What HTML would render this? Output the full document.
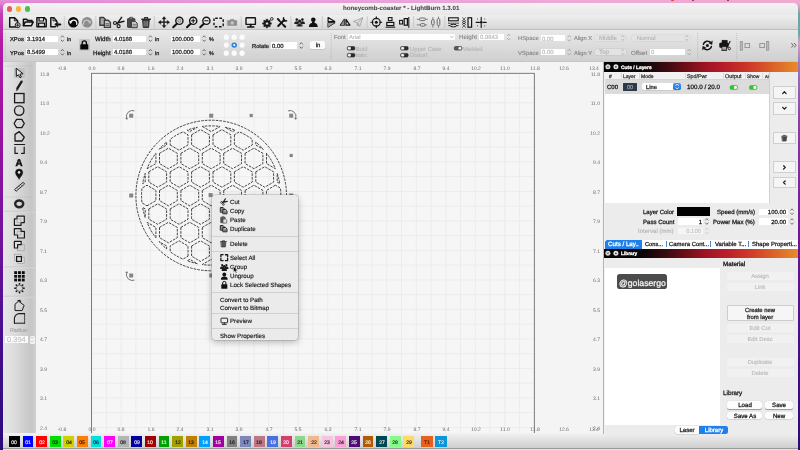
<!DOCTYPE html><html><head><meta charset="utf-8"><title>honeycomb-coaster * - LightBurn 1.3.01</title><style>
html,body{margin:0;padding:0}
body{width:800px;height:450px;overflow:hidden;position:relative;font-family:"Liberation Sans",sans-serif;
background:linear-gradient(180deg,#e58ad6 0px,#c43cb6 14px,#b31aa8 40px,#9a12a2 130px,#74129e 230px,#480f90 330px,#2a0a7a 450px);}
div{position:absolute;box-sizing:border-box}
.t{text-rendering:geometricPrecision}
#win{filter:blur(0.35px)}
svg{position:absolute;overflow:visible}
</style></head><body>
<div style="left:0px;top:0px;width:800px;height:4.5px;background:linear-gradient(90deg,rgba(238,172,222,.15) 0%,rgba(238,172,222,.6) 35%,rgba(240,175,215,.85) 70%,rgba(242,172,205,.95) 100%)"></div>
<div style="left:797px;top:4px;width:3px;height:446px;background:linear-gradient(180deg,#e8a8cc 0px,#6aa6a6 10px,#6aa6a6 30px,#d8a0c4 38px,#9a78c0 60px,#8a3aa8 120px,#74129e 230px,#480f90 330px,#2a0a7a 446px)"></div>
<div style="left:670.5px;top:0px;width:3.2px;height:1.3px;background:#e23a3a;border-radius:0 0 1px 1px"></div>
<div style="left:692px;top:0px;width:2.4px;height:1px;background:#8a4070"></div>
<div style="left:727px;top:0px;width:2.4px;height:1px;background:#8a4070"></div>
<div id="win" style="left:3px;top:3px;width:795.4px;height:450px;background:#e9e9e9;border-radius:5px 5px 0 0;overflow:hidden">
<div style="left:-3px;top:-3px;width:800px;height:454px;will-change:transform">
<div style="left:3px;top:3px;width:795px;height:11.5px;background:linear-gradient(180deg,#f4f2f4,#e9e8e9)"></div>
<div style="left:7px;top:6.4px;width:5.2px;height:5.2px;border-radius:50%;background:#ee5b55"></div>
<div style="left:15.8px;top:6.4px;width:5.2px;height:5.2px;border-radius:50%;background:#f5b63a"></div>
<div style="left:24.8px;top:6.4px;width:5.2px;height:5.2px;border-radius:50%;background:#48c04a"></div>
<svg class="t" style="left:342.8px;top:10px" width="1" height="1"><text text-anchor="start" font-size="6.16" fill="#464646" stroke="#464646" stroke-width="0.05" font-weight="bold">honeycomb-coaster * - LightBurn 1.3.01</text></svg>
<div style="left:3px;top:14.5px;width:795px;height:15px;background:linear-gradient(180deg,#efefef,#d6d6d6)"></div>
<div style="left:3px;top:29.2px;width:795px;height:0.8px;background:#bdbdbd"></div>
<div style="left:3px;top:30px;width:795px;height:31.5px;background:linear-gradient(180deg,#e9e9e9,#cfcfcf)"></div>
<div style="left:3px;top:61.3px;width:795px;height:0.7px;background:#c6c6c6"></div>
<div style="left:3px;top:62px;width:33px;height:371px;background:linear-gradient(90deg,#e6e6e6 0%,#dedede 30%,#c6c6c6 85%,#cfcfcf 100%)"></div>
<div style="left:36px;top:62px;width:567.5px;height:371px;background:#f4f4f4"></div>
<div style="left:603.5px;top:62px;width:195px;height:374px;background:#ececec"></div>
<div style="left:3px;top:433px;width:600.5px;height:16px;background:linear-gradient(180deg,#f0f0f0,#dcdcdc)"></div>
<div style="left:3px;top:435px;width:796px;height:13.5px;background:linear-gradient(180deg,#ececec,#cccccc)"></div>
<div style="left:3px;top:433px;width:600px;height:15.5px;background:linear-gradient(180deg,#f2f2f2 0%,#ececec 15%,#cccccc 100%)"></div>
<div style="left:3px;top:448.3px;width:795px;height:0.7px;background:#9a9a9a"></div>
<div style="left:3px;top:449px;width:795px;height:5px;background:#e6e6e6"></div>
<svg style="left:36px;top:62px" width="567.5" height="371" viewBox="36 62 567.5 371">
<defs><clipPath id="cv"><rect x="36" y="62" width="567.5" height="371"/></clipPath></defs>
<g clip-path="url(#cv)">
<rect x="91.6" y="73.3" width="442.71" height="442.71" fill="#f6f6f6"/>
<path d="M106.36 73.3V433M121.11 73.3V433M135.87 73.3V433M150.63 73.3V433M165.38 73.3V433M180.14 73.3V433M194.90 73.3V433M209.66 73.3V433M224.41 73.3V433M239.17 73.3V433M253.93 73.3V433M268.68 73.3V433M283.44 73.3V433M298.20 73.3V433M312.95 73.3V433M327.71 73.3V433M342.47 73.3V433M357.23 73.3V433M371.98 73.3V433M386.74 73.3V433M401.50 73.3V433M416.25 73.3V433M431.01 73.3V433M445.77 73.3V433M460.52 73.3V433M475.28 73.3V433M490.04 73.3V433M504.80 73.3V433M519.55 73.3V433M91.6 88.06H534.31M91.6 102.81H534.31M91.6 117.57H534.31M91.6 132.33H534.31M91.6 147.08H534.31M91.6 161.84H534.31M91.6 176.60H534.31M91.6 191.36H534.31M91.6 206.11H534.31M91.6 220.87H534.31M91.6 235.63H534.31M91.6 250.38H534.31M91.6 265.14H534.31M91.6 279.90H534.31M91.6 294.65H534.31M91.6 309.41H534.31M91.6 324.17H534.31M91.6 338.93H534.31M91.6 353.68H534.31M91.6 368.44H534.31M91.6 383.20H534.31M91.6 397.95H534.31M91.6 412.71H534.31M91.6 427.47H534.31M91.6 442.23H534.31" stroke="#ececec" stroke-width="1" fill="none"/>
<rect x="91.6" y="73.3" width="442.71" height="442.71" fill="none" stroke="#666" stroke-width="0.85"/>
<path d="M189.8 131.6L197.3 127.3L195.4 127.7L193.2 128.3L191.0 128.9L188.8 129.6L187.2 130.2ZM202.3 126.5L211.2 131.6L220.1 126.5L220.1 126.5L218.0 126.2L215.8 126.0L213.5 125.9L211.2 125.9L208.9 125.9L206.6 126.0L204.4 126.2L202.3 126.5ZM232.6 131.6L235.2 130.2L233.6 129.6L231.4 128.9L229.2 128.3L227.0 127.7L225.1 127.3ZM166.6 145.0L166.6 142.1L165.3 143.2L163.6 144.7L162.0 146.3L160.4 147.9L159.1 149.4ZM170.2 145.0L179.1 150.2L188.0 145.0L188.0 134.8L183.0 131.9L182.5 132.1L180.4 133.1L178.4 134.1L176.4 135.2L174.4 136.4L172.5 137.6L170.7 138.9L170.2 139.3ZM191.6 134.8L191.6 145.0L200.5 150.2L209.4 145.0L209.4 134.8L200.5 129.6ZM213.0 134.8L213.0 145.0L221.9 150.2L230.8 145.0L230.8 134.8L221.9 129.6ZM234.4 134.8L234.4 145.0L243.3 150.2L252.2 145.0L252.2 139.3L251.7 138.9L249.9 137.6L248.0 136.4L246.0 135.2L244.0 134.1L242.0 133.1L239.9 132.1L239.4 131.9ZM255.8 145.0L263.3 149.4L262.0 147.9L260.4 146.3L258.8 144.7L257.1 143.2L255.8 142.1ZM147.0 168.7L155.9 163.6L155.9 153.3L155.9 153.3L154.6 155.0L153.3 156.8L152.1 158.7L150.9 160.7L149.8 162.7L148.8 164.7L147.8 166.8L147.0 168.7ZM159.5 153.3L159.5 163.6L168.4 168.7L177.3 163.6L177.3 153.3L168.4 148.2ZM180.9 153.3L180.9 163.6L189.8 168.7L198.7 163.6L198.7 153.3L189.8 148.2ZM202.3 153.3L202.3 163.6L211.2 168.7L220.1 163.6L220.1 153.3L211.2 148.2ZM223.7 153.3L223.7 163.6L232.6 168.7L241.5 163.6L241.5 153.3L232.6 148.2ZM245.1 153.3L245.1 163.6L254.0 168.7L262.9 163.6L262.9 153.3L254.0 148.2ZM266.5 153.3L266.5 163.6L275.4 168.7L275.4 168.7L274.6 166.8L273.6 164.7L272.6 162.7L271.5 160.7L270.3 158.7L269.1 156.8L267.8 155.0L266.5 153.3ZM145.2 182.1L145.2 173.4L144.6 175.3L144.0 177.5L143.4 179.7L142.9 181.9L142.6 183.6ZM148.8 171.8L148.8 182.1L157.7 187.2L166.6 182.1L166.6 171.8L157.7 166.7ZM170.2 171.8L170.2 182.1L179.1 187.2L188.0 182.1L188.0 171.8L179.1 166.7ZM191.6 171.8L191.6 182.1L200.5 187.2L209.4 182.1L209.4 171.8L200.5 166.7ZM213.0 171.8L213.0 182.1L221.9 187.2L230.8 182.1L230.8 171.8L221.9 166.7ZM234.4 171.8L234.4 182.1L243.3 187.2L252.2 182.1L252.2 171.8L243.3 166.7ZM255.8 171.8L255.8 182.1L264.7 187.2L273.6 182.1L273.6 171.8L264.7 166.7ZM277.2 182.1L279.8 183.6L279.5 181.9L279.0 179.7L278.4 177.5L277.8 175.3L277.2 173.4ZM147.0 205.8L155.9 200.6L155.9 190.4L147.0 185.2L142.0 188.1L141.9 188.7L141.7 190.9L141.6 193.2L141.6 195.5L141.6 197.8L141.7 200.1L141.9 202.3L142.0 202.9ZM159.5 190.4L159.5 200.6L168.4 205.8L177.3 200.6L177.3 190.4L168.4 185.2ZM180.9 190.4L180.9 200.6L189.8 205.8L198.7 200.6L198.7 190.4L189.8 185.2ZM202.3 190.4L202.3 200.6L211.2 205.8L220.1 200.6L220.1 190.4L211.2 185.2ZM223.7 190.4L223.7 200.6L232.6 205.8L241.5 200.6L241.5 190.4L232.6 185.2ZM245.1 190.4L245.1 200.6L254.0 205.8L262.9 200.6L262.9 190.4L254.0 185.2ZM275.4 185.2L266.5 190.4L266.5 200.6L275.4 205.8L280.4 202.9L280.5 202.3L280.7 200.1L280.8 197.8L280.8 195.5L280.8 193.2L280.7 190.9L280.5 188.7L280.4 188.1ZM145.2 208.9L142.6 207.4L142.9 209.1L143.4 211.3L144.0 213.5L144.6 215.7L145.2 217.6ZM148.8 208.9L148.8 219.2L157.7 224.3L166.6 219.2L166.6 208.9L157.7 203.8ZM170.2 208.9L170.2 219.2L179.1 224.3L188.0 219.2L188.0 208.9L179.1 203.8ZM191.6 208.9L191.6 219.2L200.5 224.3L209.4 219.2L209.4 208.9L200.5 203.8ZM213.0 208.9L213.0 219.2L221.9 224.3L230.8 219.2L230.8 208.9L221.9 203.8ZM234.4 208.9L234.4 219.2L243.3 224.3L252.2 219.2L252.2 208.9L243.3 203.8ZM255.8 208.9L255.8 219.2L264.7 224.3L273.6 219.2L273.6 208.9L264.7 203.8ZM277.2 208.9L277.2 217.6L277.8 215.7L278.4 213.5L279.0 211.3L279.5 209.1L279.8 207.4ZM155.9 237.7L155.9 227.4L147.0 222.3L147.0 222.3L147.8 224.2L148.8 226.3L149.8 228.3L150.9 230.3L152.1 232.3L153.3 234.2L154.6 236.0L155.9 237.7ZM159.5 227.4L159.5 237.7L168.4 242.8L177.3 237.7L177.3 227.4L168.4 222.3ZM180.9 227.4L180.9 237.7L189.8 242.8L198.7 237.7L198.7 227.4L189.8 222.3ZM202.3 227.4L202.3 237.7L211.2 242.8L220.1 237.7L220.1 227.4L211.2 222.3ZM223.7 227.4L223.7 237.7L232.6 242.8L241.5 237.7L241.5 227.4L232.6 222.3ZM245.1 227.4L245.1 237.7L254.0 242.8L262.9 237.7L262.9 227.4L254.0 222.3ZM275.4 222.3L266.5 227.4L266.5 237.7L266.5 237.7L267.8 236.0L269.1 234.2L270.3 232.3L271.5 230.3L272.6 228.3L273.6 226.3L274.6 224.2L275.4 222.3ZM166.6 246.0L159.1 241.6L160.4 243.1L162.0 244.7L163.6 246.3L165.3 247.8L166.6 248.9ZM188.0 256.2L188.0 246.0L179.1 240.8L170.2 246.0L170.2 251.7L170.7 252.1L172.5 253.4L174.4 254.6L176.4 255.8L178.4 256.9L180.4 257.9L182.5 258.9L183.0 259.1ZM191.6 246.0L191.6 256.2L200.5 261.4L209.4 256.2L209.4 246.0L200.5 240.8ZM213.0 246.0L213.0 256.2L221.9 261.4L230.8 256.2L230.8 246.0L221.9 240.8ZM252.2 246.0L243.3 240.8L234.4 246.0L234.4 256.2L239.4 259.1L239.9 258.9L242.0 257.9L244.0 256.9L246.0 255.8L248.0 254.6L249.9 253.4L251.7 252.1L252.2 251.7ZM255.8 246.0L255.8 248.9L257.1 247.8L258.8 246.3L260.4 244.7L262.0 243.1L263.3 241.6ZM189.8 259.4L187.2 260.8L188.8 261.4L191.0 262.1L193.2 262.7L195.4 263.3L197.3 263.7ZM220.1 264.5L211.2 259.4L202.3 264.5L202.3 264.5L204.4 264.8L206.6 265.0L208.9 265.1L211.2 265.1L213.5 265.1L215.8 265.0L218.0 264.8L220.1 264.5ZM232.6 259.4L225.1 263.7L227.0 263.3L229.2 262.7L231.4 262.1L233.6 261.4L235.2 260.8Z" fill="none" stroke="#2c2c2c" stroke-width="0.88" stroke-dasharray="2.6 1.1" stroke-linejoin="round"/>
<circle cx="211.2" cy="195.5" r="75.3" fill="none" stroke="#2c2c2c" stroke-width="0.88" stroke-dasharray="2.6 1.1"/>
<rect x="129.20" y="113.70" width="4.0" height="4.0" fill="#858585"/>
<rect x="209.20" y="113.70" width="4.0" height="4.0" fill="#858585"/>
<rect x="289.20" y="113.70" width="4.0" height="4.0" fill="#858585"/>
<rect x="129.20" y="193.50" width="4.0" height="4.0" fill="#858585"/>
<rect x="289.20" y="193.50" width="4.0" height="4.0" fill="#858585"/>
<rect x="129.20" y="273.50" width="4.0" height="4.0" fill="#858585"/>
<rect x="209.20" y="273.50" width="4.0" height="4.0" fill="#858585"/>
<rect x="289.20" y="273.50" width="4.0" height="4.0" fill="#858585"/>
<rect x="208.60" y="193.10" width="4.0" height="4.0" fill="#858585"/>
<rect x="249.60" y="113.90" width="3.2" height="3.2" fill="#858585"/>
<rect x="289.60" y="153.90" width="3.2" height="3.2" fill="#858585"/>
<path d="M134.45 110.86A6 6 0 0 0 126.60 118.05" fill="none" stroke="#6a6a6a" stroke-width="0.9"/>
<path d="M127.07 119.79L125.06 118.47L128.15 117.64Z" fill="#6a6a6a"/>
<path d="M287.95 110.86A6 6 0 0 1 295.80 118.05" fill="none" stroke="#6a6a6a" stroke-width="0.9"/>
<path d="M295.33 119.79L297.34 118.47L294.25 117.64Z" fill="#6a6a6a"/>
<path d="M134.45 280.14A6 6 0 0 1 126.60 272.95" fill="none" stroke="#6a6a6a" stroke-width="0.9"/>
<path d="M127.07 271.21L125.06 272.53L128.15 273.36Z" fill="#6a6a6a"/>
</g></svg>
<svg class="t" style="left:62.386px;top:70px" width="1" height="1"><text text-anchor="middle" font-size="5" fill="#6c6c6c">-0.8</text></svg>
<svg class="t" style="left:62.386px;top:431px" width="1" height="1"><text text-anchor="middle" font-size="5" fill="#6c6c6c">-0.8</text></svg>
<svg class="t" style="left:91.9px;top:70px" width="1" height="1"><text text-anchor="middle" font-size="5" fill="#6c6c6c">0.0</text></svg>
<svg class="t" style="left:91.9px;top:431px" width="1" height="1"><text text-anchor="middle" font-size="5" fill="#6c6c6c">0.0</text></svg>
<svg class="t" style="left:121.414px;top:70px" width="1" height="1"><text text-anchor="middle" font-size="5" fill="#6c6c6c">0.8</text></svg>
<svg class="t" style="left:121.414px;top:431px" width="1" height="1"><text text-anchor="middle" font-size="5" fill="#6c6c6c">0.8</text></svg>
<svg class="t" style="left:150.928px;top:70px" width="1" height="1"><text text-anchor="middle" font-size="5" fill="#6c6c6c">1.6</text></svg>
<svg class="t" style="left:150.928px;top:431px" width="1" height="1"><text text-anchor="middle" font-size="5" fill="#6c6c6c">1.6</text></svg>
<svg class="t" style="left:180.442px;top:70px" width="1" height="1"><text text-anchor="middle" font-size="5" fill="#6c6c6c">2.4</text></svg>
<svg class="t" style="left:180.442px;top:431px" width="1" height="1"><text text-anchor="middle" font-size="5" fill="#6c6c6c">2.4</text></svg>
<svg class="t" style="left:209.956px;top:70px" width="1" height="1"><text text-anchor="middle" font-size="5" fill="#6c6c6c">3.1</text></svg>
<svg class="t" style="left:209.956px;top:431px" width="1" height="1"><text text-anchor="middle" font-size="5" fill="#6c6c6c">3.1</text></svg>
<svg class="t" style="left:239.47px;top:70px" width="1" height="1"><text text-anchor="middle" font-size="5" fill="#6c6c6c">3.9</text></svg>
<svg class="t" style="left:239.47px;top:431px" width="1" height="1"><text text-anchor="middle" font-size="5" fill="#6c6c6c">3.9</text></svg>
<svg class="t" style="left:268.984px;top:70px" width="1" height="1"><text text-anchor="middle" font-size="5" fill="#6c6c6c">4.7</text></svg>
<svg class="t" style="left:268.984px;top:431px" width="1" height="1"><text text-anchor="middle" font-size="5" fill="#6c6c6c">4.7</text></svg>
<svg class="t" style="left:298.498px;top:70px" width="1" height="1"><text text-anchor="middle" font-size="5" fill="#6c6c6c">5.5</text></svg>
<svg class="t" style="left:298.498px;top:431px" width="1" height="1"><text text-anchor="middle" font-size="5" fill="#6c6c6c">5.5</text></svg>
<svg class="t" style="left:328.012px;top:70px" width="1" height="1"><text text-anchor="middle" font-size="5" fill="#6c6c6c">6.3</text></svg>
<svg class="t" style="left:328.012px;top:431px" width="1" height="1"><text text-anchor="middle" font-size="5" fill="#6c6c6c">6.3</text></svg>
<svg class="t" style="left:357.526px;top:70px" width="1" height="1"><text text-anchor="middle" font-size="5" fill="#6c6c6c">7.1</text></svg>
<svg class="t" style="left:357.526px;top:431px" width="1" height="1"><text text-anchor="middle" font-size="5" fill="#6c6c6c">7.1</text></svg>
<svg class="t" style="left:387.04px;top:70px" width="1" height="1"><text text-anchor="middle" font-size="5" fill="#6c6c6c">7.9</text></svg>
<svg class="t" style="left:387.04px;top:431px" width="1" height="1"><text text-anchor="middle" font-size="5" fill="#6c6c6c">7.9</text></svg>
<svg class="t" style="left:416.554px;top:70px" width="1" height="1"><text text-anchor="middle" font-size="5" fill="#6c6c6c">8.7</text></svg>
<svg class="t" style="left:416.554px;top:431px" width="1" height="1"><text text-anchor="middle" font-size="5" fill="#6c6c6c">8.7</text></svg>
<svg class="t" style="left:446.068px;top:70px" width="1" height="1"><text text-anchor="middle" font-size="5" fill="#6c6c6c">9.4</text></svg>
<svg class="t" style="left:446.068px;top:431px" width="1" height="1"><text text-anchor="middle" font-size="5" fill="#6c6c6c">9.4</text></svg>
<svg class="t" style="left:475.582px;top:70px" width="1" height="1"><text text-anchor="middle" font-size="5" fill="#6c6c6c">10.2</text></svg>
<svg class="t" style="left:475.582px;top:431px" width="1" height="1"><text text-anchor="middle" font-size="5" fill="#6c6c6c">10.2</text></svg>
<svg class="t" style="left:505.096px;top:70px" width="1" height="1"><text text-anchor="middle" font-size="5" fill="#6c6c6c">11.0</text></svg>
<svg class="t" style="left:505.096px;top:431px" width="1" height="1"><text text-anchor="middle" font-size="5" fill="#6c6c6c">11.0</text></svg>
<svg class="t" style="left:534.61px;top:70px" width="1" height="1"><text text-anchor="middle" font-size="5" fill="#6c6c6c">11.8</text></svg>
<svg class="t" style="left:534.61px;top:431px" width="1" height="1"><text text-anchor="middle" font-size="5" fill="#6c6c6c">11.8</text></svg>
<svg class="t" style="left:564.124px;top:70px" width="1" height="1"><text text-anchor="middle" font-size="5" fill="#6c6c6c">12.6</text></svg>
<svg class="t" style="left:564.124px;top:431px" width="1" height="1"><text text-anchor="middle" font-size="5" fill="#6c6c6c">12.6</text></svg>
<svg class="t" style="left:593.638px;top:70px" width="1" height="1"><text text-anchor="middle" font-size="5" fill="#6c6c6c">13.4</text></svg>
<svg class="t" style="left:593.638px;top:431px" width="1" height="1"><text text-anchor="middle" font-size="5" fill="#6c6c6c">13.4</text></svg>
<svg class="t" style="left:40px;top:76px" width="1" height="1"><text text-anchor="start" font-size="5" fill="#6c6c6c">11.8</text></svg>
<svg class="t" style="left:600px;top:76px" width="1" height="1"><text text-anchor="end" font-size="5" fill="#6c6c6c">11.8</text></svg>
<svg class="t" style="left:40px;top:105px" width="1" height="1"><text text-anchor="start" font-size="5" fill="#6c6c6c">11.0</text></svg>
<svg class="t" style="left:600px;top:105px" width="1" height="1"><text text-anchor="end" font-size="5" fill="#6c6c6c">11.0</text></svg>
<svg class="t" style="left:40px;top:135px" width="1" height="1"><text text-anchor="start" font-size="5" fill="#6c6c6c">10.2</text></svg>
<svg class="t" style="left:600px;top:135px" width="1" height="1"><text text-anchor="end" font-size="5" fill="#6c6c6c">10.2</text></svg>
<svg class="t" style="left:40px;top:164px" width="1" height="1"><text text-anchor="start" font-size="5" fill="#6c6c6c">9.4</text></svg>
<svg class="t" style="left:600px;top:164px" width="1" height="1"><text text-anchor="end" font-size="5" fill="#6c6c6c">9.4</text></svg>
<svg class="t" style="left:40px;top:194px" width="1" height="1"><text text-anchor="start" font-size="5" fill="#6c6c6c">8.7</text></svg>
<svg class="t" style="left:600px;top:194px" width="1" height="1"><text text-anchor="end" font-size="5" fill="#6c6c6c">8.7</text></svg>
<svg class="t" style="left:40px;top:223px" width="1" height="1"><text text-anchor="start" font-size="5" fill="#6c6c6c">7.9</text></svg>
<svg class="t" style="left:600px;top:223px" width="1" height="1"><text text-anchor="end" font-size="5" fill="#6c6c6c">7.9</text></svg>
<svg class="t" style="left:40px;top:253px" width="1" height="1"><text text-anchor="start" font-size="5" fill="#6c6c6c">7.1</text></svg>
<svg class="t" style="left:600px;top:253px" width="1" height="1"><text text-anchor="end" font-size="5" fill="#6c6c6c">7.1</text></svg>
<svg class="t" style="left:40px;top:282px" width="1" height="1"><text text-anchor="start" font-size="5" fill="#6c6c6c">6.3</text></svg>
<svg class="t" style="left:600px;top:282px" width="1" height="1"><text text-anchor="end" font-size="5" fill="#6c6c6c">6.3</text></svg>
<svg class="t" style="left:40px;top:312px" width="1" height="1"><text text-anchor="start" font-size="5" fill="#6c6c6c">5.5</text></svg>
<svg class="t" style="left:600px;top:312px" width="1" height="1"><text text-anchor="end" font-size="5" fill="#6c6c6c">5.5</text></svg>
<svg class="t" style="left:40px;top:341px" width="1" height="1"><text text-anchor="start" font-size="5" fill="#6c6c6c">4.7</text></svg>
<svg class="t" style="left:600px;top:341px" width="1" height="1"><text text-anchor="end" font-size="5" fill="#6c6c6c">4.7</text></svg>
<svg class="t" style="left:40px;top:371px" width="1" height="1"><text text-anchor="start" font-size="5" fill="#6c6c6c">3.9</text></svg>
<svg class="t" style="left:600px;top:371px" width="1" height="1"><text text-anchor="end" font-size="5" fill="#6c6c6c">3.9</text></svg>
<svg class="t" style="left:40px;top:400px" width="1" height="1"><text text-anchor="start" font-size="5" fill="#6c6c6c">3.1</text></svg>
<svg class="t" style="left:600px;top:400px" width="1" height="1"><text text-anchor="end" font-size="5" fill="#6c6c6c">3.1</text></svg>
<svg class="t" style="left:40px;top:430px" width="1" height="1"><text text-anchor="start" font-size="5" fill="#6c6c6c">2.4</text></svg>
<svg class="t" style="left:600px;top:430px" width="1" height="1"><text text-anchor="end" font-size="5" fill="#6c6c6c">2.4</text></svg>
<svg class="t" style="left:10px;top:41px" width="1" height="1"><text text-anchor="start" font-size="5.77" fill="#262626" stroke="#262626" stroke-width="0.28">XPos</text></svg>
<svg class="t" style="left:10px;top:55px" width="1" height="1"><text text-anchor="start" font-size="5.77" fill="#262626" stroke="#262626" stroke-width="0.28">YPos</text></svg>
<div style="left:25.8px;top:35.6px;width:32.2px;height:6.2px;background:#fff;"></div>
<svg class="t" style="left:27px;top:41px" width="1" height="1"><text text-anchor="start" font-size="5.95" fill="#262626" stroke="#262626" stroke-width="0.28">3.1914</text></svg>
<div style="left:25.8px;top:49.1px;width:32.2px;height:6.2px;background:#fff;"></div>
<svg class="t" style="left:27px;top:54px" width="1" height="1"><text text-anchor="start" font-size="5.95" fill="#262626" stroke="#262626" stroke-width="0.28">8.5499</text></svg>
<svg class="t" style="left:66.7px;top:41px" width="1" height="1"><text text-anchor="start" font-size="5.27" fill="#262626" stroke="#262626" stroke-width="0.28">in</text></svg>
<svg class="t" style="left:66.7px;top:55px" width="1" height="1"><text text-anchor="start" font-size="5.27" fill="#262626" stroke="#262626" stroke-width="0.28">in</text></svg>
<div style="left:78.6px;top:39.2px;width:11.8px;height:11.8px;background:#c6c6c6;border-radius:1px"></div>
<svg class="t" style="left:95.2px;top:41px" width="1" height="1"><text text-anchor="start" font-size="6.1" fill="#262626" stroke="#262626" stroke-width="0.28">Width</text></svg>
<svg class="t" style="left:93.2px;top:55px" width="1" height="1"><text text-anchor="start" font-size="6.09" fill="#262626" stroke="#262626" stroke-width="0.28">Height</text></svg>
<div style="left:113px;top:35.6px;width:33px;height:6.2px;background:#fff;"></div>
<svg class="t" style="left:113.8px;top:41px" width="1" height="1"><text text-anchor="start" font-size="5.95" fill="#262626" stroke="#262626" stroke-width="0.28">4.0188</text></svg>
<div style="left:113px;top:49.1px;width:33px;height:6.2px;background:#fff;"></div>
<svg class="t" style="left:113.8px;top:54px" width="1" height="1"><text text-anchor="start" font-size="5.95" fill="#262626" stroke="#262626" stroke-width="0.28">4.0188</text></svg>
<svg class="t" style="left:155px;top:41px" width="1" height="1"><text text-anchor="start" font-size="5.4" fill="#262626" stroke="#262626" stroke-width="0.28">in</text></svg>
<svg class="t" style="left:155px;top:55px" width="1" height="1"><text text-anchor="start" font-size="5.4" fill="#262626" stroke="#262626" stroke-width="0.28">in</text></svg>
<div style="left:170.8px;top:35.6px;width:29.2px;height:6.2px;background:#fff;"></div>
<svg class="t" style="left:171.6px;top:41px" width="1" height="1"><text text-anchor="start" font-size="5.95" fill="#262626" stroke="#262626" stroke-width="0.28">100.000</text></svg>
<div style="left:170.8px;top:49.1px;width:29.2px;height:6.2px;background:#fff;"></div>
<svg class="t" style="left:171.6px;top:54px" width="1" height="1"><text text-anchor="start" font-size="5.95" fill="#262626" stroke="#262626" stroke-width="0.28">100.000</text></svg>
<svg class="t" style="left:208.7px;top:41px" width="1" height="1"><text text-anchor="start" font-size="5.4" fill="#262626" stroke="#262626" stroke-width="0.28">%</text></svg>
<svg class="t" style="left:208.7px;top:55px" width="1" height="1"><text text-anchor="start" font-size="5.4" fill="#262626" stroke="#262626" stroke-width="0.28">%</text></svg>
<svg class="t" style="left:251.8px;top:48px" width="1" height="1"><text text-anchor="start" font-size="5.77" fill="#262626" stroke="#262626" stroke-width="0.28">Rotate</text></svg>
<div style="left:270.7px;top:42.3px;width:26.1px;height:6.4px;background:#fff;"></div>
<svg class="t" style="left:272.2px;top:48px" width="1" height="1"><text text-anchor="start" font-size="5.95" fill="#262626" stroke="#262626" stroke-width="0.28">0.00</text></svg>
<div style="left:310px;top:41.2px;width:15px;height:8px;background:#fcfcfc;border-radius:1.6px;box-shadow:0 0.3px 0.6px rgba(0,0,0,.35)"></div>
<svg class="t" style="left:317.5px;top:47px" width="1" height="1"><text text-anchor="middle" font-size="5.95" fill="#262626" stroke="#262626" stroke-width="0.28">in</text></svg>
<svg class="t" style="left:334.2px;top:39px" width="1" height="1"><text text-anchor="start" font-size="5.8" fill="#858585" stroke="#858585" stroke-width="0.12">Font</text></svg>
<div style="left:347.7px;top:33.7px;width:107.4px;height:6.6px;background:#fff;border-radius:1px"></div>
<svg class="t" style="left:349.2px;top:39px" width="1" height="1"><text text-anchor="start" font-size="5.8" fill="#b4b4b4" stroke="#b4b4b4" stroke-width="0.12">Arial</text></svg>
<svg class="t" style="left:356.3px;top:51px" width="1" height="1"><text text-anchor="start" font-size="5.75" fill="#b4b4b4" stroke="#b4b4b4" stroke-width="0.12">Bold</text></svg>
<svg class="t" style="left:356.3px;top:57px" width="1" height="1"><text text-anchor="start" font-size="5.4" fill="#b4b4b4" stroke="#b4b4b4" stroke-width="0.12">Italic</text></svg>
<svg class="t" style="left:409.5px;top:51px" width="1" height="1"><text text-anchor="start" font-size="5.9" fill="#b4b4b4" stroke="#b4b4b4" stroke-width="0.12">Upper Case</text></svg>
<svg class="t" style="left:409.5px;top:57px" width="1" height="1"><text text-anchor="start" font-size="6.06" fill="#b4b4b4" stroke="#b4b4b4" stroke-width="0.12">Distort</text></svg>
<svg class="t" style="left:463.3px;top:51px" width="1" height="1"><text text-anchor="start" font-size="5.78" fill="#b4b4b4" stroke="#b4b4b4" stroke-width="0.12">Welded</text></svg>
<svg class="t" style="left:458.8px;top:39px" width="1" height="1"><text text-anchor="start" font-size="6.23" fill="#858585" stroke="#858585" stroke-width="0.12">Height</text></svg>
<div style="left:478.7px;top:33.8px;width:25.8px;height:6.4px;background:#fff;"></div>
<svg class="t" style="left:479.7px;top:39px" width="1" height="1"><text text-anchor="start" font-size="5.95" fill="#b4b4b4" stroke="#b4b4b4" stroke-width="0.12">0.9843</text></svg>
<svg class="t" style="left:518px;top:40px" width="1" height="1"><text text-anchor="start" font-size="5.82" fill="#858585" stroke="#858585" stroke-width="0.12">HSpace</text></svg>
<svg class="t" style="left:518px;top:55px" width="1" height="1"><text text-anchor="start" font-size="5.91" fill="#858585" stroke="#858585" stroke-width="0.12">VSpace</text></svg>
<div style="left:540.8px;top:35.2px;width:24.7px;height:6.2px;background:#fff;"></div>
<svg class="t" style="left:541.8px;top:41px" width="1" height="1"><text text-anchor="start" font-size="5.95" fill="#b4b4b4" stroke="#b4b4b4" stroke-width="0.12">0.00</text></svg>
<div style="left:540.8px;top:49px;width:24.7px;height:6.2px;background:#fff;"></div>
<svg class="t" style="left:541.8px;top:54px" width="1" height="1"><text text-anchor="start" font-size="5.95" fill="#b4b4b4" stroke="#b4b4b4" stroke-width="0.12">0.00</text></svg>
<svg class="t" style="left:573.8px;top:40px" width="1" height="1"><text text-anchor="start" font-size="5.68" fill="#858585" stroke="#858585" stroke-width="0.12">Align X</text></svg>
<svg class="t" style="left:573.8px;top:55px" width="1" height="1"><text text-anchor="start" font-size="5.71" fill="#858585" stroke="#858585" stroke-width="0.12">Align Y</text></svg>
<div style="left:595.2px;top:34.7px;width:31.1px;height:6.6px;background:#e3e3e3;border-radius:1.5px;box-shadow:0 0 0 0.4px rgba(0,0,0,.08)"></div>
<svg class="t" style="left:598.8px;top:40px" width="1" height="1"><text text-anchor="start" font-size="6.11" fill="#b4b4b4" stroke="#b4b4b4" stroke-width="0.12">Middle</text></svg>
<div style="left:595.2px;top:48.8px;width:31.1px;height:6.6px;background:#e3e3e3;border-radius:1.5px;box-shadow:0 0 0 0.4px rgba(0,0,0,.08)"></div>
<svg class="t" style="left:598.8px;top:54px" width="1" height="1"><text text-anchor="start" font-size="6.33" fill="#b4b4b4" stroke="#b4b4b4" stroke-width="0.12">Top</text></svg>
<div style="left:632.3px;top:34.7px;width:57.9px;height:6.6px;background:#e3e3e3;border-radius:1.5px;box-shadow:0 0 0 0.4px rgba(0,0,0,.08)"></div>
<svg class="t" style="left:636.5px;top:40px" width="1" height="1"><text text-anchor="start" font-size="5.74" fill="#b4b4b4" stroke="#b4b4b4" stroke-width="0.12">Normal</text></svg>
<svg class="t" style="left:631.2px;top:55px" width="1" height="1"><text text-anchor="start" font-size="6.08" fill="#858585" stroke="#858585" stroke-width="0.12">Offset</text></svg>
<div style="left:649.5px;top:49px;width:35.8px;height:6.2px;background:#fff;"></div>
<svg class="t" style="left:650.5px;top:54px" width="1" height="1"><text text-anchor="start" font-size="5.95" fill="#b4b4b4" stroke="#b4b4b4" stroke-width="0.12">0</text></svg>
<svg style="left:0;top:0" width="800" height="450" viewBox="0 0 800 450"><path d="M9.7 17.7h4.9l3 3v6.2h-7.9z" fill="none" stroke="#111" stroke-width="1.45" stroke-linejoin="round" stroke-linecap="round" /><path d="M14.4 17.8v3h3" fill="none" stroke="#111" stroke-width="0.9" stroke-linejoin="round" stroke-linecap="round" /><circle cx="17.7" cy="25.2" r="2.5" fill="#ececec" stroke="#151515" stroke-width="1.0"/><path d="M16.4 25.2h2.6M17.7 23.9v2.6" fill="none" stroke="#111" stroke-width="0.85" stroke-linejoin="round" stroke-linecap="round" /><path d="M23.4 25.6v-6.4h3.2l1 1.2h4.4v1.6" fill="none" stroke="#111" stroke-width="1.5" stroke-linejoin="round" stroke-linecap="round" /><path d="M23.4 25.7l1.9-3.8h8l-1.9 3.8z" fill="none" stroke="#111" stroke-width="1.5" stroke-linejoin="round" stroke-linecap="round" /><path d="M36.9 17.6h7.2l2.1 2v7.2h-9.3z" fill="none" stroke="#111" stroke-width="1.45" stroke-linejoin="round" stroke-linecap="round" /><path d="M39 17.8v3.2h4.6v-3.2" fill="none" stroke="#111" stroke-width="1.2" stroke-linejoin="round" stroke-linecap="round" /><path d="M38.6 26.6v-3.4h5.9v3.4" fill="none" stroke="#111" stroke-width="1.2" stroke-linejoin="round" stroke-linecap="round" /><path d="M56.4 21.6v-1.2l-2.8-2.8h-2.8v9.2h4.6" fill="none" stroke="#111" stroke-width="1.45" stroke-linejoin="round" stroke-linecap="round" /><path d="M53 17.8v3h3" fill="none" stroke="#111" stroke-width="0.9" stroke-linejoin="round" stroke-linecap="round" /><path d="M60.3 24.4h-3.6" fill="none" stroke="#111" stroke-width="2" stroke-linejoin="round" stroke-linecap="round" /><path d="M57.4 22l-2.6 2.4 2.6 2.4z" fill="#151515" stroke="#151515" stroke-width="0.8" stroke-linejoin="round" stroke-linecap="round" /><path d="M64.3 16V28" stroke="#c4c4c4" stroke-width="0.8" fill="none"/><circle cx="73.3" cy="22.2" r="5.3" fill="#0a0a0a" stroke="none" stroke-width="0"/><path d="M70.6 22.6c0.4-1.6 1.6-2.5 3-2.5 1.8 0 3.2 1.2 3.2 3.2 0 .4 0 .7-.1 1" fill="none" stroke="#f4f4f4" stroke-width="1.25" stroke-linejoin="round" stroke-linecap="round" /><path d="M69.6 21l2.6 0.3-1.6 2.3z" fill="#f4f4f4" stroke="#f4f4f4" stroke-width="0.5" stroke-linejoin="round" stroke-linecap="round" /><circle cx="87.1" cy="22.2" r="5.3" fill="#8b8b8b" stroke="none" stroke-width="0"/><path d="M89.8 22.6c-0.4-1.6-1.6-2.5-3-2.5-1.8 0-3.2 1.2-3.2 3.2 0 .4 0 .7.1 1" fill="none" stroke="#c4c4c4" stroke-width="1.25" stroke-linejoin="round" stroke-linecap="round" /><path d="M90.8 21l-2.6 0.3 1.6 2.3z" fill="#c4c4c4" stroke="#c4c4c4" stroke-width="0.5" stroke-linejoin="round" stroke-linecap="round" /><path d="M95.8 16V28" stroke="#c4c4c4" stroke-width="0.8" fill="none"/><path d="M99.9 17.5h3.6l1.8 1.8v5.9h-5.4z" fill="#a9a9a9" stroke="#3c3c3c" stroke-width="1.4" stroke-linejoin="round" stroke-linecap="round" /><path d="M104.4 20.3h3.8l2.2 2.2v4.9h-6z" fill="#c9c9c9" stroke="#3c3c3c" stroke-width="1.4" stroke-linejoin="round" stroke-linecap="round" /><path d="M106 23.8h2.8M106 25.4h2.8" fill="none" stroke="#3c3c3c" stroke-width="0.8" stroke-linejoin="round" stroke-linecap="round" /><path d="M121.6 17.4l-4.4 6.2M124 21.2l-7.4 2" fill="none" stroke="#1e1e1e" stroke-width="1.5" stroke-linejoin="round" stroke-linecap="round" /><circle cx="115" cy="23" r="1.5" fill="none" stroke="#1e1e1e" stroke-width="1.2"/><circle cx="118.6" cy="26.2" r="1.5" fill="none" stroke="#1e1e1e" stroke-width="1.2"/><rect x="127.5" y="18.6" width="7.4" height="8.8" rx="0.6" fill="#4a4a4a" stroke="#3a3a3a" stroke-width="0.9" /><rect x="129.5" y="17.3" width="3.4" height="2.1" rx="0.5" fill="#7a7a7a" stroke="#3a3a3a" stroke-width="0.7" /><path d="M131.7 21.3h3.6l1.9 1.9v4.5h-5.5z" fill="#c4c4c4" stroke="#3a3a3a" stroke-width="1.0" stroke-linejoin="round" stroke-linecap="round" /><path d="M133 24.5h2.9M133 25.9h2.9" fill="none" stroke="#666" stroke-width="0.6" stroke-linejoin="round" stroke-linecap="round" /><path d="M143 20h6.2l-0.6 7.4h-5z" fill="#484848" stroke="#2c2c2c" stroke-width="1.0" stroke-linejoin="round" stroke-linecap="round" /><path d="M141.9 19.2h8.4" fill="none" stroke="#2a2a2a" stroke-width="1.5" stroke-linejoin="round" stroke-linecap="round" /><path d="M144.6 18.5v-0.9h3v0.9" fill="none" stroke="#2a2a2a" stroke-width="1.1" stroke-linejoin="round" stroke-linecap="round" /><path d="M144.8 21.6v4.4M146.1 21.6v4.4M147.4 21.6v4.4" fill="none" stroke="#a8a8a8" stroke-width="0.6" stroke-linejoin="round" stroke-linecap="round" /><path d="M154.3 16V28" stroke="#c4c4c4" stroke-width="0.8" fill="none"/><path d="M164 17.6v9.2M159.4 22.2h9.2" fill="none" stroke="#111" stroke-width="1.3" stroke-linejoin="round" stroke-linecap="round" /><path d="M164 16.8l-1.8 2.2h3.6zM164 27.6l-1.8-2.2h3.6zM158.6 22.2l2.2-1.8v3.6zM169.4 22.2l-2.2-1.8v3.6z" fill="#151515" stroke="#151515" stroke-width="0.4" stroke-linejoin="round" stroke-linecap="round" /><circle cx="179.4" cy="20.8" r="3.6" fill="#e9e9e9" stroke="#151515" stroke-width="1.4"/><path d="M176.8 23.7l-3.6 3.6" fill="none" stroke="#111" stroke-width="2" stroke-linejoin="round" stroke-linecap="round" /><circle cx="179.4" cy="20.8" r="1.7" fill="#bdbdbd" stroke="#666" stroke-width="0.6"/><circle cx="193.2" cy="20.8" r="3.6" fill="#e9e9e9" stroke="#151515" stroke-width="1.4"/><path d="M190.6 23.7l-3.6 3.6" fill="none" stroke="#111" stroke-width="2" stroke-linejoin="round" stroke-linecap="round" /><path d="M191.5 20.8h3.4" fill="none" stroke="#111" stroke-width="1.1" stroke-linejoin="round" stroke-linecap="round" /><path d="M193.2 19.1v3.4" fill="none" stroke="#111" stroke-width="1.1" stroke-linejoin="round" stroke-linecap="round" /><circle cx="206.4" cy="20.8" r="3.6" fill="#e9e9e9" stroke="#151515" stroke-width="1.4"/><path d="M203.8 23.7l-3.6 3.6" fill="none" stroke="#111" stroke-width="2" stroke-linejoin="round" stroke-linecap="round" /><path d="M204.70000000000002 20.8h3.4" fill="none" stroke="#111" stroke-width="1.1" stroke-linejoin="round" stroke-linecap="round" /><rect x="214" y="18.2" width="9.2" height="8.6" rx="1.2" fill="none" stroke="#151515" stroke-width="1.4" stroke-dasharray="2.6 1.6"/><path d="M227.6 20.6h2.2l0.8-1.2h3.2l0.8 1.2h2.2v4.8h-9.2z" fill="#8d8d8d" stroke="#8d8d8d" stroke-width="0.6" stroke-linejoin="round" stroke-linecap="round" /><circle cx="232.2" cy="22.9" r="1.6" fill="#c9c9c9" stroke="#b0b0b0" stroke-width="0.5"/><path d="M241.2 16V28" stroke="#c4c4c4" stroke-width="0.8" fill="none"/><rect x="246" y="17.8" width="9.4" height="6.6" rx="0.5" fill="#e9e9e9" stroke="#151515" stroke-width="1.4" /><path d="M250.7 24.6v1.6" fill="none" stroke="#111" stroke-width="1.8" stroke-linejoin="round" stroke-linecap="round" /><path d="M247.6 26.9h6.2" fill="none" stroke="#111" stroke-width="1.5" stroke-linejoin="round" stroke-linecap="round" /><path d="M271.33 22.74L271.33 24.26L270.00 24.27L269.67 25.08L270.60 26.03L269.53 27.10L268.58 26.17L267.77 26.50L267.76 27.83L266.24 27.83L266.23 26.50L265.42 26.17L264.47 27.10L263.40 26.03L264.33 25.08L264.00 24.27L262.67 24.26L262.67 22.74L264.00 22.73L264.33 21.92L263.40 20.97L264.47 19.90L265.42 20.83L266.23 20.50L266.24 19.17L267.76 19.17L267.77 20.50L268.58 20.83L269.53 19.90L270.60 20.97L269.67 21.92L270.00 22.73ZM268.5 23.5a1.5 1.5 0 1 0 -3.0 0a1.5 1.5 0 1 0 3.0 0Z" fill="#111" fill-rule="evenodd" stroke="#111" stroke-width="0.5" stroke-linejoin="round"/><circle cx="271.8" cy="18.9" r="1.35" fill="none" stroke="#151515" stroke-width="0.85"/><path d="M278.2 26l6-6" fill="none" stroke="#111" stroke-width="2.0" stroke-linejoin="round" stroke-linecap="round" /><path d="M283.6 17.9a2.3 2.3 0 0 0 3 3" fill="none" stroke="#111" stroke-width="1.5" stroke-linejoin="round" stroke-linecap="round" /><path d="M277.8 18.9l1.6 1.8" fill="none" stroke="#111" stroke-width="1.9" stroke-linejoin="round" stroke-linecap="round" /><path d="M279.4 20.7l5.2 5.6" fill="none" stroke="#111" stroke-width="1.3" stroke-linejoin="round" stroke-linecap="round" /><path d="M283.6 25.2l1.6 1.6" fill="none" stroke="#111" stroke-width="2.0" stroke-linejoin="round" stroke-linecap="round" /><path d="M290.8 16V28" stroke="#c4c4c4" stroke-width="0.8" fill="none"/><circle cx="296.8" cy="19.6" r="1.275" fill="#1c1c1c" stroke="none" stroke-width="0"/><path d="M294.25 24.02c0 -2.21 1.02 -2.89 2.55 -2.89s2.55 0.68 2.55 2.89z" fill="#1c1c1c" stroke="none" stroke-width="0" stroke-linejoin="round" stroke-linecap="round" /><circle cx="302.4" cy="19.6" r="1.275" fill="#1c1c1c" stroke="none" stroke-width="0"/><path d="M299.85 24.02c0 -2.21 1.02 -2.89 2.55 -2.89s2.55 0.68 2.55 2.89z" fill="#1c1c1c" stroke="none" stroke-width="0" stroke-linejoin="round" stroke-linecap="round" /><circle cx="299.6" cy="21" r="1.575" fill="#1c1c1c" stroke="none" stroke-width="0"/><path d="M296.45 26.46c0 -2.73 1.26 -3.57 3.15 -3.57s3.15 0.84 3.15 3.57z" fill="#1c1c1c" stroke="none" stroke-width="0" stroke-linejoin="round" stroke-linecap="round" /><path d="M297 26.4c0-2 1-2.8 2.6-2.8s2.6 0.8 2.6 2.8" fill="none" stroke="#e0e0e0" stroke-width="0.5" stroke-linejoin="round" stroke-linecap="round" /><circle cx="313.3" cy="19.7" r="2.3" fill="#111" stroke="none" stroke-width="0"/><path d="M308.9 26.9c0-3 1.6-4.2 4.4-4.2s4.4 1.2 4.4 4.2z" fill="#111" stroke="none" stroke-width="0" stroke-linejoin="round" stroke-linecap="round" /><path d="M312 21.5h2.6v2h-2.6z" fill="#111" stroke="none" stroke-width="0" stroke-linejoin="round" stroke-linecap="round" /><path d="M322.3 16V28" stroke="#c4c4c4" stroke-width="0.8" fill="none"/><path d="M328.1 17.5l6.6 4.1h-6.6zM328.1 22.8h6.6l-6.6 4.1z" fill="none" stroke="#111" stroke-width="1.2" stroke-linejoin="round" stroke-linecap="round" /><path d="M328.1 22.8h6.6l-6.6 4.1z" fill="#9a9a9a" stroke="none" stroke-width="0" stroke-linejoin="round" stroke-linecap="round" /><path d="M344.3 19.4v5.8h-3.9zM346 19.4v5.8h3.9z" fill="none" stroke="#111" stroke-width="1.2" stroke-linejoin="round" stroke-linecap="round" /><path d="M344.3 19.4v5.8h-3.9z" fill="#8a8a8a" stroke="none" stroke-width="0" stroke-linejoin="round" stroke-linecap="round" /><path d="M353.8 21.4l9-3.6-3.2 8.6-2.2-3.4zM362.8 17.8l-5.4 5.2v2.8l1.4-2" fill="none" stroke="#9a9a9a" stroke-width="0.8" stroke-linejoin="round" stroke-linecap="round" /><path d="M367.2 16V28" stroke="#c4c4c4" stroke-width="0.8" fill="none"/><circle cx="376.3" cy="22.2" r="3.9" fill="none" stroke="#151515" stroke-width="1.2"/><circle cx="376.3" cy="22.2" r="1.5" fill="#151515" stroke="none" stroke-width="0"/><path d="M376.3 16.8v2M376.3 25.6v2M370.9 22.2h2M379.7 22.2h2" fill="none" stroke="#111" stroke-width="1.1" stroke-linejoin="round" stroke-linecap="round" /><rect x="388.4" y="17.6" width="3.6" height="3" rx="0" fill="none" stroke="#151515" stroke-width="1.1" /><rect x="386.8" y="22.4" width="7" height="3.2" rx="0" fill="none" stroke="#151515" stroke-width="1.2" /><path d="M386 27.2h8.8" fill="none" stroke="#111" stroke-width="1" stroke-linejoin="round" stroke-linecap="round" /><rect x="399.6" y="20.4" width="3" height="3.6" rx="0" fill="none" stroke="#151515" stroke-width="1.1" /><rect x="404.2" y="18.6" width="3.2" height="6.6" rx="0" fill="none" stroke="#151515" stroke-width="1.2" /><path d="M408.8 17.4v10" fill="none" stroke="#111" stroke-width="1" stroke-linejoin="round" stroke-linecap="round" /><path d="M413.6 16V28" stroke="#c4c4c4" stroke-width="0.8" fill="none"/><rect x="419.4" y="18" width="6" height="2.6" rx="1.2" fill="none" stroke="#6c6c6c" stroke-width="1" /><rect x="420.4" y="23.6" width="4.6" height="2.6" rx="1.2" fill="none" stroke="#6c6c6c" stroke-width="1" /><path d="M417.2 19.3h2M425.6 19.3h2M417.2 24.9h3M425.2 24.9h1.4" fill="none" stroke="#6c6c6c" stroke-width="0.8" stroke-linejoin="round" stroke-linecap="round" /><rect x="431.6" y="19.6" width="2.6" height="5.4" rx="1.2" fill="none" stroke="#6c6c6c" stroke-width="1" /><rect x="437.2" y="18.6" width="2.6" height="7" rx="1.2" fill="none" stroke="#6c6c6c" stroke-width="1" /><path d="M432.9 17.4v2M432.9 25.2v2M438.5 17v1.4M438.5 25.8v1.6" fill="none" stroke="#6c6c6c" stroke-width="0.8" stroke-linejoin="round" stroke-linecap="round" /><path d="M444.8 16V28" stroke="#c4c4c4" stroke-width="0.8" fill="none"/><rect x="448.6" y="17.8" width="9.6" height="3" rx="0" fill="none" stroke="#151515" stroke-width="1.1" /><path d="M448.4 23.2h10" fill="none" stroke="#111" stroke-width="0.8" stroke-linejoin="round" stroke-linecap="round" stroke-dasharray="1.2 1"/><ellipse cx="453.4" cy="25.6" rx="3.4" ry="1.3" fill="none" stroke="#151515" stroke-width="1"/><path d="M448.6 25.6h1.4M456.8 25.6h1.4" fill="none" stroke="#111" stroke-width="0.8" stroke-linejoin="round" stroke-linecap="round" /><rect x="468" y="17.8" width="3.6" height="9.4" rx="0" fill="none" stroke="#151515" stroke-width="1.2" /><circle cx="464" cy="22.4" r="1.3" fill="none" stroke="#151515" stroke-width="0.9"/><path d="M462.4 17.6l3.2 3M465.6 17.6l-3.2 3M462.4 24.4l3.2 3M465.6 24.4l-3.2 3" fill="none" stroke="#111" stroke-width="0.6" stroke-linejoin="round" stroke-linecap="round" /><path d="M481.2 17.4v3.2M481.2 24.2v3.2M476.2 22.4h3.2M483 22.4h3.2" fill="none" stroke="#111" stroke-width="1.1" stroke-linejoin="round" stroke-linecap="round" /><path d="M477.6 19v0M484.8 19v0M477.6 25.8v0M484.8 25.8v0" fill="none" stroke="#111" stroke-width="0.9" stroke-linejoin="round" stroke-linecap="round" /><circle cx="481.2" cy="22.4" r="1.3" fill="#151515" stroke="none" stroke-width="0"/><path d="M5.4 33V59" stroke="#b4b4b4" stroke-width="0.8" stroke-dasharray="0.8 1.3" fill="none"/><path d="M61.1 37.165000000000006l1.3 -1.4300000000000002 1.3 1.4300000000000002M61.1 40.035l1.3 1.4300000000000002 1.3 -1.4300000000000002" fill="none" stroke="#4a4a4a" stroke-width="0.75" stroke-linecap="round" stroke-linejoin="round"/><path d="M61.1 50.865l1.3 -1.4300000000000002 1.3 1.4300000000000002M61.1 53.73499999999999l1.3 1.4300000000000002 1.3 -1.4300000000000002" fill="none" stroke="#4a4a4a" stroke-width="0.75" stroke-linecap="round" stroke-linejoin="round"/><rect x="80.3" y="44.3" width="8" height="5.3" rx="0.6" fill="#050505" stroke="none" stroke-width="0" /><path d="M82.2 44.6v-1.6a2.1 2.1 0 0 1 4.2 0v1.6" fill="none" stroke="#050505" stroke-width="1.3" stroke-linejoin="round" stroke-linecap="round" /><path d="M149.1 37.165000000000006l1.3 -1.4300000000000002 1.3 1.4300000000000002M149.1 40.035l1.3 1.4300000000000002 1.3 -1.4300000000000002" fill="none" stroke="#4a4a4a" stroke-width="0.75" stroke-linecap="round" stroke-linejoin="round"/><path d="M149.1 50.865l1.3 -1.4300000000000002 1.3 1.4300000000000002M149.1 53.73499999999999l1.3 1.4300000000000002 1.3 -1.4300000000000002" fill="none" stroke="#4a4a4a" stroke-width="0.75" stroke-linecap="round" stroke-linejoin="round"/><path d="M202.89999999999998 37.165000000000006l1.3 -1.4300000000000002 1.3 1.4300000000000002M202.89999999999998 40.035l1.3 1.4300000000000002 1.3 -1.4300000000000002" fill="none" stroke="#4a4a4a" stroke-width="0.75" stroke-linecap="round" stroke-linejoin="round"/><path d="M202.89999999999998 50.865l1.3 -1.4300000000000002 1.3 1.4300000000000002M202.89999999999998 53.73499999999999l1.3 1.4300000000000002 1.3 -1.4300000000000002" fill="none" stroke="#4a4a4a" stroke-width="0.75" stroke-linecap="round" stroke-linejoin="round"/><circle cx="226.3" cy="37.2" r="2.6" fill="#fbfbfb" stroke="none" stroke-width="0"/><circle cx="226.3" cy="45.1" r="2.6" fill="#fbfbfb" stroke="none" stroke-width="0"/><circle cx="226.3" cy="53.2" r="2.6" fill="#fbfbfb" stroke="none" stroke-width="0"/><circle cx="234.2" cy="37.2" r="2.6" fill="#fbfbfb" stroke="none" stroke-width="0"/><circle cx="234.2" cy="45.1" r="2.7" fill="#2382dc" stroke="none" stroke-width="0"/><circle cx="234.2" cy="45.1" r="1.05" fill="#fff" stroke="none" stroke-width="0"/><circle cx="234.2" cy="53.2" r="2.6" fill="#fbfbfb" stroke="none" stroke-width="0"/><circle cx="242.1" cy="37.2" r="2.6" fill="#fbfbfb" stroke="none" stroke-width="0"/><circle cx="242.1" cy="45.1" r="2.6" fill="#fbfbfb" stroke="none" stroke-width="0"/><circle cx="242.1" cy="53.2" r="2.6" fill="#fbfbfb" stroke="none" stroke-width="0"/><path d="M300.0 44.065000000000005l1.3 -1.4300000000000002 1.3 1.4300000000000002M300.0 46.934999999999995l1.3 1.4300000000000002 1.3 -1.4300000000000002" fill="none" stroke="#4a4a4a" stroke-width="0.75" stroke-linecap="round" stroke-linejoin="round"/><path d="M331.2 33V59" stroke="#a8a8a8" stroke-width="0.8" stroke-dasharray="0.8 1.3" fill="none"/><path d="M450.4 36.3l1.4 1.5 1.4-1.5" fill="none" stroke="#9a9a9a" stroke-width="0.7"/><rect x="347.3" y="46.5" width="7.6" height="3.6" rx="1.3" fill="#2a2a2a" stroke="#2e2e2e" stroke-width="0.6" /><rect x="347.6" y="46.8" width="3.4" height="3" rx="1.1" fill="#f4f4f4" stroke="#3a3a3a" stroke-width="0.35" /><rect x="347.3" y="53.4" width="7.6" height="3.6" rx="1.3" fill="#2a2a2a" stroke="#2e2e2e" stroke-width="0.6" /><rect x="347.6" y="53.7" width="3.4" height="3" rx="1.1" fill="#f4f4f4" stroke="#3a3a3a" stroke-width="0.35" /><rect x="400.6" y="46.5" width="7.6" height="3.6" rx="1.3" fill="#2a2a2a" stroke="#2e2e2e" stroke-width="0.6" /><rect x="400.9" y="46.8" width="3.4" height="3" rx="1.1" fill="#f4f4f4" stroke="#3a3a3a" stroke-width="0.35" /><rect x="400.6" y="53.4" width="7.6" height="3.6" rx="1.3" fill="#2a2a2a" stroke="#2e2e2e" stroke-width="0.6" /><rect x="400.9" y="53.7" width="3.4" height="3" rx="1.1" fill="#f4f4f4" stroke="#3a3a3a" stroke-width="0.35" /><rect x="454.3" y="46.5" width="7.6" height="3.6" rx="1.3" fill="#5a5a5a" stroke="#2e2e2e" stroke-width="0.6" /><rect x="458.2" y="46.8" width="3.4" height="3" rx="1.1" fill="#f4f4f4" stroke="#3a3a3a" stroke-width="0.35" /><path d="M507.4 35.565000000000005l1.3 -1.4300000000000002 1.3 1.4300000000000002M507.4 38.434999999999995l1.3 1.4300000000000002 1.3 -1.4300000000000002" fill="none" stroke="#9a9a9a" stroke-width="0.75" stroke-linecap="round" stroke-linejoin="round"/><path d="M568.0 36.865l1.3 -1.4300000000000002 1.3 1.4300000000000002M568.0 39.73499999999999l1.3 1.4300000000000002 1.3 -1.4300000000000002" fill="none" stroke="#9a9a9a" stroke-width="0.75" stroke-linecap="round" stroke-linejoin="round"/><path d="M568.0 50.665000000000006l1.3 -1.4300000000000002 1.3 1.4300000000000002M568.0 53.535l1.3 1.4300000000000002 1.3 -1.4300000000000002" fill="none" stroke="#9a9a9a" stroke-width="0.75" stroke-linecap="round" stroke-linejoin="round"/><path d="M621.4999999999999 36.76l1.2 -1.32 1.2 1.32M621.4999999999999 39.24l1.2 1.32 1.2 -1.32" fill="none" stroke="#a0a0a0" stroke-width="0.6" stroke-linecap="round" stroke-linejoin="round"/><path d="M621.4999999999999 50.86l1.2 -1.32 1.2 1.32M621.4999999999999 53.34l1.2 1.32 1.2 -1.32" fill="none" stroke="#a0a0a0" stroke-width="0.6" stroke-linecap="round" stroke-linejoin="round"/><path d="M685.4 36.76l1.2 -1.32 1.2 1.32M685.4 39.24l1.2 1.32 1.2 -1.32" fill="none" stroke="#a0a0a0" stroke-width="0.6" stroke-linecap="round" stroke-linejoin="round"/><path d="M688.0 50.665000000000006l1.3 -1.4300000000000002 1.3 1.4300000000000002M688.0 53.535l1.3 1.4300000000000002 1.3 -1.4300000000000002" fill="none" stroke="#9a9a9a" stroke-width="0.75" stroke-linecap="round" stroke-linejoin="round"/><path d="M697.7 33V59" stroke="#a8a8a8" stroke-width="0.8" stroke-dasharray="0.8 1.3" fill="none"/><path d="M703.4 44.4a4.2 4.2 0 0 1 7.6-1.4M711.4 46.4a4.2 4.2 0 0 1 -7.6 1.4" fill="none" stroke="#111" stroke-width="1.4" stroke-linejoin="round" stroke-linecap="round" /><path d="M712.4 41.2l-0.4 3.4-3-1.4zM702.4 49.6l0.4-3.4 3 1.4z" fill="#151515" stroke="#151515" stroke-width="0.4" stroke-linejoin="round" stroke-linecap="round" /><circle cx="707.4" cy="45.4" r="1.5" fill="#151515" stroke="none" stroke-width="0"/><rect x="722" y="40.2" width="5.2" height="3" rx="0" fill="#151515" stroke="#151515" stroke-width="0.5" /><rect x="719.6" y="43" width="8.6" height="4.4" rx="0.6" fill="#151515" stroke="#151515" stroke-width="0.6" /><rect x="722" y="46.4" width="4.6" height="4.2" rx="0" fill="#e6e6e6" stroke="#151515" stroke-width="0.8" /><path d="M722.9 48h2.8M722.9 49.4h2.8" fill="none" stroke="#111" stroke-width="0.5" stroke-linejoin="round" stroke-linecap="round" /><path d="M730 41.4l-2.6 5.2" fill="none" stroke="#111" stroke-width="1.1" stroke-linejoin="round" stroke-linecap="round" /><circle cx="729.3" cy="48.6" r="1.2" fill="none" stroke="#151515" stroke-width="0.9"/><path d="M736.7 33V59" stroke="#a8a8a8" stroke-width="0.8" stroke-dasharray="0.8 1.3" fill="none"/><rect x="740.2" y="41.4" width="2.2" height="8.8" rx="0" fill="#b9b9b9" stroke="#8f8f8f" stroke-width="0.7" /><rect x="745" y="43.6" width="4.6" height="4" rx="0" fill="none" stroke="#8f8f8f" stroke-width="0.9" /><rect x="766.6" y="41.4" width="2.2" height="8.8" rx="0" fill="#b9b9b9" stroke="#8f8f8f" stroke-width="0.7" /><rect x="759.8" y="43.6" width="4.6" height="4" rx="0" fill="none" stroke="#8f8f8f" stroke-width="0.9" /><path d="M791.6 43.4l1.7 1.9-1.7 1.9M794.4 43.4l1.7 1.9-1.7 1.9" fill="none" stroke="#444" stroke-width="0.8" stroke-linejoin="round" stroke-linecap="round" /></svg>
<div style="left:13.8px;top:67.6px;width:11.4px;height:10.6px;background:#c2c2c2;border-radius:1px"></div>
<svg class="t" style="left:19.3px;top:166px" width="1" height="1"><text text-anchor="middle" font-size="9.8" fill="#0c0c0c" stroke="#0c0c0c" stroke-width="0.5" font-weight="bold">A</text></svg>
<svg class="t" style="left:10.2px;top:332px" width="1" height="1"><text text-anchor="start" font-size="5.37" fill="#a2a2a2" stroke="#a2a2a2" stroke-width="0.12">Radius:</text></svg>
<div style="left:5.1px;top:336.2px;width:23px;height:6.9px;background:#fbfbfb"></div>
<svg class="t" style="left:7.4px;top:342px" width="1" height="1"><text text-anchor="start" font-size="7.51" fill="#c2c2c2" stroke="#c2c2c2" stroke-width="0.1">0.394</text></svg>
<div style="left:29.5px;top:335.6px;width:5.2px;height:8px;background:#f4f4f4;border-radius:1.5px"></div>
<svg style="left:0;top:0" width="800" height="450" viewBox="0 0 800 450"><path d="M5.5 66H32.5" stroke="#b0b0b0" stroke-width="0.8" stroke-dasharray="0.8 1.3" fill="none"/><path d="M16.2 68.6l0.2 7.8 2-1.7 1.5 3 1.5-0.7-1.5-2.9 2.8-0.3z" fill="#e4e4e4" stroke="#1a1a1a" stroke-width="1.0" stroke-linejoin="round" stroke-linecap="round" /><path d="M21.6 81.6l-4.2 6.8" fill="none" stroke="#1a1a1a" stroke-width="2.3" stroke-linejoin="round" stroke-linecap="round" /><path d="M17 89l-0.7 1.7 1.6-1z" fill="#1a1a1a" stroke="#1a1a1a" stroke-width="0.5" stroke-linejoin="round" stroke-linecap="round" /><rect x="14.6" y="93.5" width="9.4" height="9.2" rx="0" fill="none" stroke="#1a1a1a" stroke-width="1.3" /><circle cx="19.2" cy="110.6" r="4.7" fill="none" stroke="#1a1a1a" stroke-width="1.3"/><path d="M14.1 123.5l2.5-4.1h5.2l2.5 4.1-2.5 4.1h-5.2z" fill="none" stroke="#1a1a1a" stroke-width="1.3" stroke-linejoin="round" stroke-linecap="round" /><path d="M15 141v-6.6l4.3-2.8 5 5.6-2.2 3.8z" fill="none" stroke="#1a1a1a" stroke-width="1.3" stroke-linejoin="round" stroke-linecap="round" /><path d="M14.6 144.5h10" fill="none" stroke="#1a1a1a" stroke-width="1.2" stroke-linejoin="round" stroke-linecap="round" /><path d="M15 147.2v6.2h2.6M24.2 147.2v6.2h-2.6" fill="none" stroke="#1a1a1a" stroke-width="1.2" stroke-linejoin="round" stroke-linecap="round" /><path d="M19.1 179.2c-2.2-3-3.7-4.6-3.7-6.6a3.7 3.7 0 0 1 7.4 0c0 2-1.5 3.6-3.7 6.6z" fill="#111" stroke="#111" stroke-width="0.3" stroke-linejoin="round" stroke-linecap="round" /><circle cx="19.1" cy="172.4" r="1.3" fill="#e0e0e0" stroke="none" stroke-width="0"/><path d="M14.9 189.3l8.2-7 1.5 1.7-8.2 7z" fill="none" stroke="#1a1a1a" stroke-width="0.9" stroke-linejoin="round" stroke-linecap="round" /><path d="M17 187.6l.8.9M18.8 186l.8.9M20.6 184.5l.8.9" fill="none" stroke="#1a1a1a" stroke-width="0.5" stroke-linejoin="round" stroke-linecap="round" /><path d="M5.5 197H32.5" stroke="#b0b0b0" stroke-width="0.8" stroke-dasharray="0.8 1.3" fill="none"/><ellipse cx="19.2" cy="203.8" rx="4" ry="3.4" fill="none" stroke="#262626" stroke-width="2.5"/><path d="M4 211.9H35" stroke="#e6e6e6" stroke-width="0.7"/><path d="M4 211.2H35" stroke="#bcbcbc" stroke-width="0.6"/><path d="M17 216.2h7.3v6.4h-3.3v2.8h-6.6v-6.6h2.6z" fill="#dadada" stroke="#1a1a1a" stroke-width="1.2" stroke-linejoin="round" stroke-linecap="round" /><path d="M17 218.8h4v3.8M17 218.8v3.8h4" fill="none" stroke="#8a8a8a" stroke-width="0.5" stroke-linejoin="round" stroke-linecap="round" /><path d="M14.4 228.6h6.6v2.8h3.4v6.6h-6.8v-3h-3.2z" fill="#dadada" stroke="#1a1a1a" stroke-width="1.2" stroke-linejoin="round" stroke-linecap="round" /><path d="M17.6 231.4h3.4v3.6h-3.4z" fill="none" stroke="#8a8a8a" stroke-width="0.5" stroke-linejoin="round" stroke-linecap="round" /><rect x="17.6" y="244.6" width="6.6" height="6.2" rx="0" fill="#d2d2d2" stroke="#9a9a9a" stroke-width="0.6" /><path d="M14.4 241.4h6.8v3.2h-3.6v3.4h-3.2z" fill="#e0e0e0" stroke="#1a1a1a" stroke-width="1.2" stroke-linejoin="round" stroke-linecap="round" /><rect x="14.6" y="254.2" width="6.4" height="6.4" rx="0" fill="#d8d8d8" stroke="#9a9a9a" stroke-width="0.6" /><rect x="17.8" y="257.2" width="6.4" height="6.4" rx="0" fill="#d8d8d8" stroke="#9a9a9a" stroke-width="0.6" /><rect x="16.6" y="256.6" width="4.8" height="4.8" rx="0" fill="#dedede" stroke="#1a1a1a" stroke-width="1.2" /><path d="M4 267.6H35" stroke="#e6e6e6" stroke-width="0.7"/><path d="M4 266.9H35" stroke="#bcbcbc" stroke-width="0.6"/><rect x="14.2" y="271.2" width="2.9" height="2.8" rx="0" fill="#0c0c0c" stroke="none" stroke-width="0" /><rect x="14.2" y="274.9" width="2.9" height="2.8" rx="0" fill="#0c0c0c" stroke="none" stroke-width="0" /><rect x="14.2" y="278.6" width="2.9" height="2.8" rx="0" fill="#0c0c0c" stroke="none" stroke-width="0" /><rect x="18" y="271.2" width="2.9" height="2.8" rx="0" fill="#0c0c0c" stroke="none" stroke-width="0" /><rect x="18" y="274.9" width="2.9" height="2.8" rx="0" fill="#0c0c0c" stroke="none" stroke-width="0" /><rect x="18" y="278.6" width="2.9" height="2.8" rx="0" fill="#0c0c0c" stroke="none" stroke-width="0" /><rect x="21.8" y="271.2" width="2.9" height="2.8" rx="0" fill="#0c0c0c" stroke="none" stroke-width="0" /><rect x="21.8" y="274.9" width="2.9" height="2.8" rx="0" fill="#0c0c0c" stroke="none" stroke-width="0" /><rect x="21.8" y="278.6" width="2.9" height="2.8" rx="0" fill="#0c0c0c" stroke="none" stroke-width="0" /><circle cx="19.5" cy="288.2" r="3.2" fill="none" stroke="#333" stroke-width="0.7"/><circle cx="23.9" cy="288.2" r="0.9" fill="#111" stroke="none" stroke-width="0"/><circle cx="22.6113" cy="291.311" r="0.9" fill="#111" stroke="none" stroke-width="0"/><circle cx="19.5" cy="292.6" r="0.9" fill="#111" stroke="none" stroke-width="0"/><circle cx="16.3887" cy="291.311" r="0.9" fill="#111" stroke="none" stroke-width="0"/><circle cx="15.1" cy="288.2" r="0.9" fill="#111" stroke="none" stroke-width="0"/><circle cx="16.3887" cy="285.089" r="0.9" fill="#111" stroke="none" stroke-width="0"/><circle cx="19.5" cy="283.8" r="0.9" fill="#111" stroke="none" stroke-width="0"/><circle cx="22.6113" cy="285.089" r="0.9" fill="#111" stroke="none" stroke-width="0"/><path d="M4 296.9H35" stroke="#e6e6e6" stroke-width="0.7"/><path d="M4 296.2H35" stroke="#bcbcbc" stroke-width="0.6"/><path d="M15 310.2v-6l3.6-3 5.6 4.2-2 4.8z" fill="none" stroke="#1a1a1a" stroke-width="1.0" stroke-linejoin="round" stroke-linecap="round" /><path d="M18 300.8a2 2 0 0 1 2.6 0.6" fill="none" stroke="#1a1a1a" stroke-width="1.2" stroke-linejoin="round" stroke-linecap="round" /><path d="M14.4 323.2v-4.6a5 5 0 0 1 5-5h5.2" fill="none" stroke="#1a1a1a" stroke-width="1.1" stroke-linejoin="round" stroke-linecap="round" /><path d="M14.4 323.2h10.2" fill="none" stroke="#1a1a1a" stroke-width="1.0" stroke-linejoin="round" stroke-linecap="round" /><path d="M24.6 313.6v9.6" fill="none" stroke="#1a1a1a" stroke-width="0.8" stroke-linejoin="round" stroke-linecap="round" stroke-dasharray="1 0.8"/><path d="M30.900000000000002 338.36000000000007l1.2 -1.32 1.2 1.32M30.900000000000002 340.84l1.2 1.32 1.2 -1.32" fill="none" stroke="#aaa" stroke-width="0.6" stroke-linecap="round" stroke-linejoin="round"/></svg>
<div style="left:602.9px;top:62px;width:0.9px;height:372px;background:#b2b2b2"></div>
<div style="left:603.8px;top:62px;width:1px;height:372px;background:#f2f2f2"></div>
<div style="left:603.7px;top:62.2px;width:194.7px;height:9.6px;background:linear-gradient(90deg,#050505 0%,#0a0405 20%,#3a0a10 32%,#6c0e18 42%,#9c1424 52%,#bc2028 64%,#cf3c28 76%,#dc6428 88%,#e88c2a 100%)"></div>
<svg class="t" style="left:621px;top:69px" width="1" height="1"><text text-anchor="start" font-size="4.9" fill="#fff" stroke="#fff" stroke-width="0.28" font-weight="bold">Cuts / Layers</text></svg>
<div style="left:604.8px;top:71.8px;width:164.4px;height:8.5px;background:#f1f1f1;border-bottom:0.5px solid #d4d4d4"></div>
<svg class="t" style="left:608.7px;top:78px" width="1" height="1"><text text-anchor="start" font-size="4.86" fill="#3a3a3a" stroke="#3a3a3a" stroke-width="0.28">#</text></svg>
<svg class="t" style="left:622.8px;top:78px" width="1" height="1"><text text-anchor="start" font-size="5" fill="#3a3a3a" stroke="#3a3a3a" stroke-width="0.28">Layer</text></svg>
<svg class="t" style="left:641.3px;top:78px" width="1" height="1"><text text-anchor="start" font-size="4.96" fill="#3a3a3a" stroke="#3a3a3a" stroke-width="0.28">Mode</text></svg>
<svg class="t" style="left:686.7px;top:78px" width="1" height="1"><text text-anchor="start" font-size="5.32" fill="#3a3a3a" stroke="#3a3a3a" stroke-width="0.28">Spd/Pwr</text></svg>
<svg class="t" style="left:725px;top:78px" width="1" height="1"><text text-anchor="start" font-size="5.53" fill="#3a3a3a" stroke="#3a3a3a" stroke-width="0.28">Output</text></svg>
<svg class="t" style="left:747px;top:78px" width="1" height="1"><text text-anchor="start" font-size="4.92" fill="#3a3a3a" stroke="#3a3a3a" stroke-width="0.28">Show</text></svg>
<svg class="t" style="left:765px;top:78px" width="1" height="1"><text text-anchor="start" font-size="4.16" fill="#3a3a3a" stroke="#3a3a3a" stroke-width="0.28">Ai</text></svg>
<div style="left:620.6px;top:72.6px;width:0.6px;height:7px;background:#dadada"></div>
<div style="left:639.3px;top:72.6px;width:0.6px;height:7px;background:#dadada"></div>
<div style="left:684.5px;top:72.6px;width:0.6px;height:7px;background:#dadada"></div>
<div style="left:722.6px;top:72.6px;width:0.6px;height:7px;background:#dadada"></div>
<div style="left:744.6px;top:72.6px;width:0.6px;height:7px;background:#dadada"></div>
<div style="left:762.4px;top:72.6px;width:0.6px;height:7px;background:#dadada"></div>
<div style="left:604.8px;top:80.3px;width:164.4px;height:13.5px;background:#dcdcdc"></div>
<svg class="t" style="left:607.2px;top:89px" width="1" height="1"><text text-anchor="start" font-size="6.05" fill="#1c1c1c" stroke="#1c1c1c" stroke-width="0.28">C00</text></svg>
<div style="left:623.2px;top:83.2px;width:13.6px;height:8.2px;background:#2f3a49;border-radius:0.5px"></div>
<svg class="t" style="left:630px;top:89px" width="1" height="1"><text text-anchor="middle" font-size="5.6" fill="#8f99a6" stroke="#8f99a6" stroke-width="0.28">00</text></svg>
<div style="left:642px;top:82.8px;width:39px;height:7.6px;background:#fff;border-radius:1.8px;box-shadow:0 0.3px 0.5px rgba(0,0,0,.3)"></div>
<svg class="t" style="left:645.8px;top:89px" width="1" height="1"><text text-anchor="start" font-size="5.77" fill="#222" stroke="#222" stroke-width="0.28">Line</text></svg>
<div style="left:673.4px;top:82.8px;width:7.6px;height:7.6px;background:linear-gradient(180deg,#4a96f0,#1f6fe0);border-radius:1.8px"></div>
<svg class="t" style="left:687px;top:89px" width="1" height="1"><text text-anchor="start" font-size="6.25" fill="#1c1c1c" stroke="#1c1c1c" stroke-width="0.28">100.0 / 20.0</text></svg>
<div style="left:604.8px;top:93.8px;width:164.4px;height:108.9px;background:#fff"></div>
<div style="left:769.2px;top:71.8px;width:0.6px;height:131px;background:#d0d0d0"></div>
<div style="left:773.3px;top:86.3px;width:22.4px;height:12.7px;background:#f5f5f5;border:0.6px solid #cfcfcf;border-radius:0.5px"></div>
<div style="left:773.3px;top:101.7px;width:22.4px;height:13px;background:#f5f5f5;border:0.6px solid #cfcfcf;border-radius:0.5px"></div>
<div style="left:773.3px;top:131.8px;width:22.4px;height:12.6px;background:#f5f5f5;border:0.6px solid #cfcfcf;border-radius:0.5px"></div>
<div style="left:773.3px;top:161.3px;width:22.4px;height:12.2px;background:#f5f5f5;border:0.6px solid #cfcfcf;border-radius:0.5px"></div>
<div style="left:773.3px;top:176.6px;width:22.4px;height:11.9px;background:#f5f5f5;border:0.6px solid #cfcfcf;border-radius:0.5px"></div>
<svg class="t" style="left:642.8px;top:214px" width="1" height="1"><text text-anchor="start" font-size="6" fill="#1e1e1e" stroke="#1e1e1e" stroke-width="0.28">Layer Color</text></svg>
<div style="left:677.2px;top:207.3px;width:33px;height:8.5px;background:#000"></div>
<svg class="t" style="left:642.8px;top:224px" width="1" height="1"><text text-anchor="start" font-size="6.07" fill="#1e1e1e" stroke="#1e1e1e" stroke-width="0.28">Pass Count</text></svg>
<div style="left:677.7px;top:218.2px;width:25.8px;height:6.6px;background:#fff;"></div>
<svg class="t" style="left:701.9px;top:224px" width="1" height="1"><text text-anchor="end" font-size="5.95" fill="#1e1e1e" stroke="#1e1e1e" stroke-width="0.28">1</text></svg>
<svg class="t" style="left:638.3px;top:233px" width="1" height="1"><text text-anchor="start" font-size="6.03" fill="#b4b4b4" stroke="#b4b4b4" stroke-width="0.12">Interval (mm)</text></svg>
<div style="left:677.7px;top:227.8px;width:25.8px;height:6.4px;background:#f6f6f6;"></div>
<svg class="t" style="left:701.3px;top:233px" width="1" height="1"><text text-anchor="end" font-size="5.95" fill="#bdbdbd" stroke="#bdbdbd" stroke-width="0.12">0.100</text></svg>
<svg class="t" style="left:716.9px;top:214px" width="1" height="1"><text text-anchor="start" font-size="6.07" fill="#1e1e1e" stroke="#1e1e1e" stroke-width="0.28">Speed (mm/s)</text></svg>
<div style="left:759.4px;top:208.5px;width:28.6px;height:6.4px;background:#fff;"></div>
<svg class="t" style="left:786.2px;top:214px" width="1" height="1"><text text-anchor="end" font-size="5.95" fill="#1e1e1e" stroke="#1e1e1e" stroke-width="0.28">100.00</text></svg>
<svg class="t" style="left:713.2px;top:224px" width="1" height="1"><text text-anchor="start" font-size="6.12" fill="#1e1e1e" stroke="#1e1e1e" stroke-width="0.28">Power Max (%)</text></svg>
<div style="left:759.4px;top:218.3px;width:28.6px;height:6.4px;background:#fff;"></div>
<svg class="t" style="left:786.2px;top:224px" width="1" height="1"><text text-anchor="end" font-size="5.95" fill="#1e1e1e" stroke="#1e1e1e" stroke-width="0.28">20.00</text></svg>
<div style="left:605.2px;top:239.6px;width:193.2px;height:9px;background:#fff"></div>
<div style="left:605.2px;top:239.6px;width:36.8px;height:9px;background:#1e80ea;border-radius:2.5px 0 0 0"></div>
<svg class="t" style="left:607.8px;top:246px" width="1" height="1"><text text-anchor="start" font-size="6.2" fill="#fff" stroke="#fff" stroke-width="0.28">Cuts / Lay..</text></svg>
<svg class="t" style="left:645px;top:246px" width="1" height="1"><text text-anchor="start" font-size="5.68" fill="#1c1c1c" stroke="#1c1c1c" stroke-width="0.28">Cons...</text></svg>
<svg class="t" style="left:668.7px;top:246px" width="1" height="1"><text text-anchor="start" font-size="5.91" fill="#1c1c1c" stroke="#1c1c1c" stroke-width="0.28">Camera Cont...</text></svg>
<svg class="t" style="left:714.7px;top:246px" width="1" height="1"><text text-anchor="start" font-size="6" fill="#1c1c1c" stroke="#1c1c1c" stroke-width="0.28">Variable T...</text></svg>
<svg class="t" style="left:751.6px;top:246px" width="1" height="1"><text text-anchor="start" font-size="6" fill="#1c1c1c" stroke="#1c1c1c" stroke-width="0.28">Shape Properti...</text></svg>
<div style="left:665.65px;top:240.8px;width:0.7px;height:6.6px;background:#4a86c8"></div>
<div style="left:710.45px;top:240.8px;width:0.7px;height:6.6px;background:#4a86c8"></div>
<div style="left:748.05px;top:240.8px;width:0.7px;height:6.6px;background:#4a86c8"></div>
<div style="left:603.7px;top:248.7px;width:194.7px;height:9.6px;background:linear-gradient(90deg,#050505 0%,#0a0405 20%,#3a0a10 32%,#6c0e18 42%,#9c1424 52%,#bc2028 64%,#cf3c28 76%,#dc6428 88%,#e88c2a 100%)"></div>
<svg class="t" style="left:621px;top:255px" width="1" height="1"><text text-anchor="start" font-size="4.78" fill="#fff" stroke="#fff" stroke-width="0.28" font-weight="bold">Library</text></svg>
<div style="left:604.8px;top:268px;width:114.8px;height:156.6px;background:#fff"></div>
<div style="left:616.5px;top:274.3px;width:50.5px;height:14.4px;background:#4b4b4b;border-radius:2.8px"></div>
<svg class="t" style="left:618.6px;top:286px" width="1" height="1"><text text-anchor="start" font-size="8.66" fill="#f2f2f2" stroke="#f2f2f2" stroke-width="0.28">@golasergo</text></svg>
<svg class="t" style="left:723px;top:266px" width="1" height="1"><text text-anchor="start" font-size="6.24" fill="#1a1a1a" stroke="#1a1a1a" stroke-width="0.32">Material</text></svg>
<div style="left:726.7px;top:271.9px;width:66.9px;height:8.6px;background:#f1f1f1;border-radius:1.5px"></div>
<svg class="t" style="left:760.15px;top:278px" width="1" height="1"><text text-anchor="middle" font-size="5.9" fill="#b8b8b8" stroke="#b8b8b8" stroke-width="0.12">Assign</text></svg>
<div style="left:726.7px;top:282.8px;width:66.9px;height:7.8px;background:#f1f1f1;border-radius:1.5px"></div>
<svg class="t" style="left:760.15px;top:289px" width="1" height="1"><text text-anchor="middle" font-size="5.9" fill="#b8b8b8" stroke="#b8b8b8" stroke-width="0.12">Link</text></svg>
<div style="left:726.7px;top:305px;width:66.9px;height:15.9px;background:#f6f6f6;border:0.6px solid #cdcdcd;border-radius:1px"></div>
<svg class="t" style="left:760.15px;top:312px" width="1" height="1"><text text-anchor="middle" font-size="5.9" fill="#1c1c1c" stroke="#1c1c1c" stroke-width="0.28">Create new</text></svg>
<svg class="t" style="left:760.15px;top:319px" width="1" height="1"><text text-anchor="middle" font-size="5.9" fill="#1c1c1c" stroke="#1c1c1c" stroke-width="0.28">from layer</text></svg>
<div style="left:726.7px;top:323.8px;width:66.9px;height:7.8px;background:#f1f1f1;border-radius:1.5px"></div>
<svg class="t" style="left:760.15px;top:330px" width="1" height="1"><text text-anchor="middle" font-size="5.9" fill="#b8b8b8" stroke="#b8b8b8" stroke-width="0.12">Edit Cut</text></svg>
<div style="left:726.7px;top:334.5px;width:66.9px;height:8px;background:#f1f1f1;border-radius:1.5px"></div>
<svg class="t" style="left:760.15px;top:341px" width="1" height="1"><text text-anchor="middle" font-size="5.9" fill="#b8b8b8" stroke="#b8b8b8" stroke-width="0.12">Edit Desc</text></svg>
<div style="left:726.7px;top:357.5px;width:66.9px;height:8.1px;background:#f1f1f1;border-radius:1.5px"></div>
<svg class="t" style="left:760.15px;top:364px" width="1" height="1"><text text-anchor="middle" font-size="5.9" fill="#b8b8b8" stroke="#b8b8b8" stroke-width="0.12">Duplicate</text></svg>
<div style="left:726.7px;top:368.5px;width:66.9px;height:8.1px;background:#f1f1f1;border-radius:1.5px"></div>
<svg class="t" style="left:760.15px;top:375px" width="1" height="1"><text text-anchor="middle" font-size="5.9" fill="#b8b8b8" stroke="#b8b8b8" stroke-width="0.12">Delete</text></svg>
<svg class="t" style="left:723px;top:395px" width="1" height="1"><text text-anchor="start" font-size="6.31" fill="#1a1a1a" stroke="#1a1a1a" stroke-width="0.28">Library</text></svg>
<div style="left:727px;top:401.3px;width:35px;height:7.5px;background:#fdfdfd;border-radius:2px;box-shadow:0 0.3px 0.7px rgba(0,0,0,.35)"></div>
<svg class="t" style="left:744.5px;top:407px" width="1" height="1"><text text-anchor="middle" font-size="6.1" fill="#1c1c1c" stroke="#1c1c1c" stroke-width="0.28">Load</text></svg>
<div style="left:765px;top:401.3px;width:28px;height:7.5px;background:#fdfdfd;border-radius:2px;box-shadow:0 0.3px 0.7px rgba(0,0,0,.35)"></div>
<svg class="t" style="left:779px;top:407px" width="1" height="1"><text text-anchor="middle" font-size="6.1" fill="#1c1c1c" stroke="#1c1c1c" stroke-width="0.28">Save</text></svg>
<div style="left:727px;top:411.8px;width:35px;height:7.6px;background:#fdfdfd;border-radius:2px;box-shadow:0 0.3px 0.7px rgba(0,0,0,.35)"></div>
<svg class="t" style="left:744.5px;top:418px" width="1" height="1"><text text-anchor="middle" font-size="6.1" fill="#1c1c1c" stroke="#1c1c1c" stroke-width="0.28">Save As</text></svg>
<div style="left:765px;top:411.8px;width:28px;height:7.6px;background:#fdfdfd;border-radius:2px;box-shadow:0 0.3px 0.7px rgba(0,0,0,.35)"></div>
<svg class="t" style="left:779px;top:418px" width="1" height="1"><text text-anchor="middle" font-size="6.1" fill="#1c1c1c" stroke="#1c1c1c" stroke-width="0.28">New</text></svg>
<div style="left:674.5px;top:426.3px;width:24.3px;height:8.2px;background:#fdfdfd;border-radius:2.2px 0 0 2.2px;box-shadow:0 0.3px 0.7px rgba(0,0,0,.35)"></div>
<svg class="t" style="left:686.6px;top:432px" width="1" height="1"><text text-anchor="middle" font-size="6" fill="#1c1c1c" stroke="#1c1c1c" stroke-width="0.28">Laser</text></svg>
<div style="left:698.8px;top:426.3px;width:29.5px;height:8.2px;background:#1e80ea;border-radius:0 2.2px 2.2px 0"></div>
<svg class="t" style="left:713.6px;top:432px" width="1" height="1"><text text-anchor="middle" font-size="6" fill="#fff" stroke="#fff" stroke-width="0.28">Library</text></svg>
<svg style="left:0;top:0" width="800" height="450" viewBox="0 0 800 450"><circle cx="607.9" cy="66.8" r="2.5" fill="#e2e2e2" stroke="none" stroke-width="0"/><path d="M607 65.89999999999999l1.8 1.8M608.8 65.89999999999999l-1.8 1.8" fill="none" stroke="#333" stroke-width="0.55" stroke-linejoin="round" stroke-linecap="round" /><circle cx="615.9" cy="66.8" r="2.5" fill="#e2e2e2" stroke="none" stroke-width="0"/><circle cx="615.9" cy="66.8" r="0.9" fill="#444" stroke="none" stroke-width="0"/><path d="M675.9000000000001 85.515l1.3 -1.4300000000000002 1.3 1.4300000000000002M675.9000000000001 87.68499999999999l1.3 1.4300000000000002 1.3 -1.4300000000000002" fill="none" stroke="#fff" stroke-width="0.8" stroke-linecap="round" stroke-linejoin="round"/><rect x="730" y="85.4" width="7.6" height="4.2" rx="1.5" fill="#2fc430" stroke="#27a828" stroke-width="0.4" /><rect x="734" y="86" width="3" height="3" rx="1.0" fill="#f6f6f6" stroke="none" stroke-width="0" /><rect x="749.4" y="85.4" width="7.6" height="4.2" rx="1.5" fill="#2fc430" stroke="#27a828" stroke-width="0.4" /><rect x="753.4" y="86" width="3" height="3" rx="1.0" fill="#f6f6f6" stroke="none" stroke-width="0" /><path d="M782.6999999999999 93.55000000000001l1.7-1.9 1.7 1.9" fill="none" stroke="#1c1c1c" stroke-width="1.25" stroke-linejoin="round" stroke-linecap="round" /><path d="M782.6999999999999 107.3l1.7 1.9 1.7-1.9" fill="none" stroke="#1c1c1c" stroke-width="1.25" stroke-linejoin="round" stroke-linecap="round" /><path d="M782.1999999999999 136.90000000000003h4.4l-0.5 4.2h-3.4z" fill="#4a4a4a" stroke="#333" stroke-width="0.6" stroke-linejoin="round" stroke-linecap="round" /><path d="M781.6 136.20000000000002h5.6M783.4 135.40000000000003h2" fill="none" stroke="#333" stroke-width="0.8" stroke-linejoin="round" stroke-linecap="round" /><path d="M783.6 165.8l1.7 1.6-1.7 1.6" fill="none" stroke="#1c1c1c" stroke-width="1.25" stroke-linejoin="round" stroke-linecap="round" /><path d="M785.1999999999999 180.95000000000002l-1.7 1.6 1.7 1.6" fill="none" stroke="#1c1c1c" stroke-width="1.25" stroke-linejoin="round" stroke-linecap="round" /><path d="M705.5 220.065l1.3 -1.4300000000000002 1.3 1.4300000000000002M705.5 222.935l1.3 1.4300000000000002 1.3 -1.4300000000000002" fill="none" stroke="#4a4a4a" stroke-width="0.75" stroke-linecap="round" stroke-linejoin="round"/><path d="M705.5 229.565l1.3 -1.4300000000000002 1.3 1.4300000000000002M705.5 232.435l1.3 1.4300000000000002 1.3 -1.4300000000000002" fill="none" stroke="#c4c4c4" stroke-width="0.75" stroke-linecap="round" stroke-linejoin="round"/><path d="M790.7 210.265l1.3 -1.4300000000000002 1.3 1.4300000000000002M790.7 213.135l1.3 1.4300000000000002 1.3 -1.4300000000000002" fill="none" stroke="#4a4a4a" stroke-width="0.75" stroke-linecap="round" stroke-linejoin="round"/><path d="M790.7 220.065l1.3 -1.4300000000000002 1.3 1.4300000000000002M790.7 222.935l1.3 1.4300000000000002 1.3 -1.4300000000000002" fill="none" stroke="#4a4a4a" stroke-width="0.75" stroke-linecap="round" stroke-linejoin="round"/><circle cx="607.9" cy="253.3" r="2.5" fill="#e2e2e2" stroke="none" stroke-width="0"/><path d="M607 252.4l1.8 1.8M608.8 252.4l-1.8 1.8" fill="none" stroke="#333" stroke-width="0.55" stroke-linejoin="round" stroke-linecap="round" /><circle cx="615.9" cy="253.3" r="2.5" fill="#e2e2e2" stroke="none" stroke-width="0"/><circle cx="615.9" cy="253.3" r="0.9" fill="#444" stroke="none" stroke-width="0"/></svg>
<div style="left:9px;top:436.1px;width:10.9px;height:10.8px;background:#000000"></div>
<svg class="t" style="left:14.45px;top:444px" width="1" height="1"><text text-anchor="middle" font-size="5.1" fill="#e5e5e5" stroke="#e5e5e5" stroke-width="0.16">00</text></svg>
<div style="left:22.6px;top:436.1px;width:10.9px;height:10.8px;background:#0000FF"></div>
<svg class="t" style="left:28.05px;top:444px" width="1" height="1"><text text-anchor="middle" font-size="5.1" fill="#e5e5ff" stroke="#e5e5ff" stroke-width="0.16">01</text></svg>
<div style="left:36.2px;top:436.1px;width:10.9px;height:10.8px;background:#FF0000"></div>
<svg class="t" style="left:41.65px;top:444px" width="1" height="1"><text text-anchor="middle" font-size="5.1" fill="#ffe5e5" stroke="#ffe5e5" stroke-width="0.16">02</text></svg>
<div style="left:49.8px;top:436.1px;width:10.9px;height:10.8px;background:#00E000"></div>
<svg class="t" style="left:55.25px;top:444px" width="1" height="1"><text text-anchor="middle" font-size="5.1" fill="#002800" stroke="#002800" stroke-width="0.16">03</text></svg>
<div style="left:63.4px;top:436.1px;width:10.9px;height:10.8px;background:#D0D000"></div>
<svg class="t" style="left:68.85px;top:444px" width="1" height="1"><text text-anchor="middle" font-size="5.1" fill="#252500" stroke="#252500" stroke-width="0.16">04</text></svg>
<div style="left:77px;top:436.1px;width:10.9px;height:10.8px;background:#FF8000"></div>
<svg class="t" style="left:82.45px;top:444px" width="1" height="1"><text text-anchor="middle" font-size="5.1" fill="#2d1700" stroke="#2d1700" stroke-width="0.16">05</text></svg>
<div style="left:90.6px;top:436.1px;width:10.9px;height:10.8px;background:#00E0E0"></div>
<svg class="t" style="left:96.05px;top:444px" width="1" height="1"><text text-anchor="middle" font-size="5.1" fill="#002828" stroke="#002828" stroke-width="0.16">06</text></svg>
<div style="left:104.2px;top:436.1px;width:10.9px;height:10.8px;background:#FF00FF"></div>
<svg class="t" style="left:109.65px;top:444px" width="1" height="1"><text text-anchor="middle" font-size="5.1" fill="#ffe5ff" stroke="#ffe5ff" stroke-width="0.16">07</text></svg>
<div style="left:117.8px;top:436.1px;width:10.9px;height:10.8px;background:#B4B4B4"></div>
<svg class="t" style="left:123.25px;top:444px" width="1" height="1"><text text-anchor="middle" font-size="5.1" fill="#202020" stroke="#202020" stroke-width="0.16">08</text></svg>
<div style="left:131.4px;top:436.1px;width:10.9px;height:10.8px;background:#0000A0"></div>
<svg class="t" style="left:136.85px;top:444px" width="1" height="1"><text text-anchor="middle" font-size="5.1" fill="#e5e5f5" stroke="#e5e5f5" stroke-width="0.16">09</text></svg>
<div style="left:145px;top:436.1px;width:10.9px;height:10.8px;background:#A00000"></div>
<svg class="t" style="left:150.45px;top:444px" width="1" height="1"><text text-anchor="middle" font-size="5.1" fill="#f5e5e5" stroke="#f5e5e5" stroke-width="0.16">10</text></svg>
<div style="left:158.6px;top:436.1px;width:10.9px;height:10.8px;background:#00A000"></div>
<svg class="t" style="left:164.05px;top:444px" width="1" height="1"><text text-anchor="middle" font-size="5.1" fill="#e5f5e5" stroke="#e5f5e5" stroke-width="0.16">11</text></svg>
<div style="left:172.2px;top:436.1px;width:10.9px;height:10.8px;background:#A0A000"></div>
<svg class="t" style="left:177.65px;top:444px" width="1" height="1"><text text-anchor="middle" font-size="5.1" fill="#1c1c00" stroke="#1c1c00" stroke-width="0.16">12</text></svg>
<div style="left:185.8px;top:436.1px;width:10.9px;height:10.8px;background:#C08000"></div>
<svg class="t" style="left:191.25px;top:444px" width="1" height="1"><text text-anchor="middle" font-size="5.1" fill="#221700" stroke="#221700" stroke-width="0.16">13</text></svg>
<div style="left:199.4px;top:436.1px;width:10.9px;height:10.8px;background:#00A0FF"></div>
<svg class="t" style="left:204.85px;top:444px" width="1" height="1"><text text-anchor="middle" font-size="5.1" fill="#e5f5ff" stroke="#e5f5ff" stroke-width="0.16">14</text></svg>
<div style="left:213px;top:436.1px;width:10.9px;height:10.8px;background:#A000A0"></div>
<svg class="t" style="left:218.45px;top:444px" width="1" height="1"><text text-anchor="middle" font-size="5.1" fill="#f5e5f5" stroke="#f5e5f5" stroke-width="0.16">15</text></svg>
<div style="left:226.6px;top:436.1px;width:10.9px;height:10.8px;background:#808080"></div>
<svg class="t" style="left:232.05px;top:444px" width="1" height="1"><text text-anchor="middle" font-size="5.1" fill="#171717" stroke="#171717" stroke-width="0.16">16</text></svg>
<div style="left:240.2px;top:436.1px;width:10.9px;height:10.8px;background:#7D87B9"></div>
<svg class="t" style="left:245.65px;top:444px" width="1" height="1"><text text-anchor="middle" font-size="5.1" fill="#161821" stroke="#161821" stroke-width="0.16">17</text></svg>
<div style="left:253.8px;top:436.1px;width:10.9px;height:10.8px;background:#BB7784"></div>
<svg class="t" style="left:259.25px;top:444px" width="1" height="1"><text text-anchor="middle" font-size="5.1" fill="#211517" stroke="#211517" stroke-width="0.16">18</text></svg>
<div style="left:267.4px;top:436.1px;width:10.9px;height:10.8px;background:#4A6FE3"></div>
<svg class="t" style="left:272.85px;top:444px" width="1" height="1"><text text-anchor="middle" font-size="5.1" fill="#ecf0fc" stroke="#ecf0fc" stroke-width="0.16">19</text></svg>
<div style="left:281px;top:436.1px;width:10.9px;height:10.8px;background:#D33F6A"></div>
<svg class="t" style="left:286.45px;top:444px" width="1" height="1"><text text-anchor="middle" font-size="5.1" fill="#faebf0" stroke="#faebf0" stroke-width="0.16">20</text></svg>
<div style="left:294.6px;top:436.1px;width:10.9px;height:10.8px;background:#8CD78C"></div>
<svg class="t" style="left:300.05px;top:444px" width="1" height="1"><text text-anchor="middle" font-size="5.1" fill="#192619" stroke="#192619" stroke-width="0.16">21</text></svg>
<div style="left:308.2px;top:436.1px;width:10.9px;height:10.8px;background:#F0B98D"></div>
<svg class="t" style="left:313.65px;top:444px" width="1" height="1"><text text-anchor="middle" font-size="5.1" fill="#2b2119" stroke="#2b2119" stroke-width="0.16">22</text></svg>
<div style="left:321.8px;top:436.1px;width:10.9px;height:10.8px;background:#F6C4E1"></div>
<svg class="t" style="left:327.25px;top:444px" width="1" height="1"><text text-anchor="middle" font-size="5.1" fill="#2c2328" stroke="#2c2328" stroke-width="0.16">23</text></svg>
<div style="left:335.4px;top:436.1px;width:10.9px;height:10.8px;background:#FA9ED4"></div>
<svg class="t" style="left:340.85px;top:444px" width="1" height="1"><text text-anchor="middle" font-size="5.1" fill="#2d1c26" stroke="#2d1c26" stroke-width="0.16">24</text></svg>
<div style="left:349px;top:436.1px;width:10.9px;height:10.8px;background:#500A78"></div>
<svg class="t" style="left:354.45px;top:444px" width="1" height="1"><text text-anchor="middle" font-size="5.1" fill="#ede6f1" stroke="#ede6f1" stroke-width="0.16">25</text></svg>
<div style="left:362.6px;top:436.1px;width:10.9px;height:10.8px;background:#B45A00"></div>
<svg class="t" style="left:368.05px;top:444px" width="1" height="1"><text text-anchor="middle" font-size="5.1" fill="#f7eee5" stroke="#f7eee5" stroke-width="0.16">26</text></svg>
<div style="left:376.2px;top:436.1px;width:10.9px;height:10.8px;background:#004754"></div>
<svg class="t" style="left:381.65px;top:444px" width="1" height="1"><text text-anchor="middle" font-size="5.1" fill="#e5eced" stroke="#e5eced" stroke-width="0.16">27</text></svg>
<div style="left:389.8px;top:436.1px;width:10.9px;height:10.8px;background:#86FA88"></div>
<svg class="t" style="left:395.25px;top:444px" width="1" height="1"><text text-anchor="middle" font-size="5.1" fill="#182d18" stroke="#182d18" stroke-width="0.16">28</text></svg>
<div style="left:403.4px;top:436.1px;width:10.9px;height:10.8px;background:#FFDB66"></div>
<svg class="t" style="left:408.85px;top:444px" width="1" height="1"><text text-anchor="middle" font-size="5.1" fill="#2d2712" stroke="#2d2712" stroke-width="0.16">29</text></svg>
<div style="left:421.2px;top:436.1px;width:11.5px;height:10.8px;background:#E8601C"></div>
<svg class="t" style="left:426.95px;top:444px" width="1" height="1"><text text-anchor="middle" font-size="5.1" fill="#4a1c06" stroke="#4a1c06" stroke-width="0.16">T1</text></svg>
<div style="left:435px;top:436.1px;width:11.5px;height:10.8px;background:#0C96D9"></div>
<svg class="t" style="left:440.75px;top:444px" width="1" height="1"><text text-anchor="middle" font-size="5.1" fill="#d8f0ff" stroke="#d8f0ff" stroke-width="0.16">T2</text></svg>
<div style="left:211.7px;top:194.6px;width:86.8px;height:145.6px;background:#ebebeb;border-radius:3.5px;box-shadow:0 0 0 0.5px rgba(0,0,0,.22),0 2px 7px rgba(0,0,0,.28)"></div>
<svg class="t" style="left:229.7px;top:204px" width="1" height="1"><text text-anchor="start" font-size="6.15" fill="#222" stroke="#222" stroke-width="0.17">Cut</text></svg>
<svg class="t" style="left:229.7px;top:213px" width="1" height="1"><text text-anchor="start" font-size="6.15" fill="#222" stroke="#222" stroke-width="0.17">Copy</text></svg>
<svg class="t" style="left:229.7px;top:222px" width="1" height="1"><text text-anchor="start" font-size="6.15" fill="#222" stroke="#222" stroke-width="0.17">Paste</text></svg>
<svg class="t" style="left:229.7px;top:231px" width="1" height="1"><text text-anchor="start" font-size="6.15" fill="#222" stroke="#222" stroke-width="0.17">Duplicate</text></svg>
<div style="left:212px;top:235.8px;width:86.2px;height:0.6px;background:#d0d0d0"></div>
<svg class="t" style="left:229.7px;top:246px" width="1" height="1"><text text-anchor="start" font-size="6.15" fill="#222" stroke="#222" stroke-width="0.17">Delete</text></svg>
<div style="left:212px;top:250.6px;width:86.2px;height:0.6px;background:#d0d0d0"></div>
<svg class="t" style="left:229.7px;top:260px" width="1" height="1"><text text-anchor="start" font-size="6.15" fill="#222" stroke="#222" stroke-width="0.17">Select All</text></svg>
<svg class="t" style="left:229.7px;top:269px" width="1" height="1"><text text-anchor="start" font-size="6.15" fill="#222" stroke="#222" stroke-width="0.17">Group</text></svg>
<svg class="t" style="left:229.7px;top:278px" width="1" height="1"><text text-anchor="start" font-size="6.15" fill="#222" stroke="#222" stroke-width="0.17">Ungroup</text></svg>
<svg class="t" style="left:229.7px;top:287px" width="1" height="1"><text text-anchor="start" font-size="6.15" fill="#222" stroke="#222" stroke-width="0.17">Lock Selected Shapes</text></svg>
<div style="left:212px;top:292px;width:86.2px;height:0.6px;background:#d0d0d0"></div>
<svg class="t" style="left:220px;top:302px" width="1" height="1"><text text-anchor="start" font-size="6.15" fill="#222" stroke="#222" stroke-width="0.17">Convert to Path</text></svg>
<svg class="t" style="left:220px;top:310px" width="1" height="1"><text text-anchor="start" font-size="6.15" fill="#222" stroke="#222" stroke-width="0.17">Convert to Bitmap</text></svg>
<div style="left:212px;top:313.4px;width:86.2px;height:0.6px;background:#d0d0d0"></div>
<svg class="t" style="left:230px;top:323px" width="1" height="1"><text text-anchor="start" font-size="6.15" fill="#222" stroke="#222" stroke-width="0.17">Preview</text></svg>
<div style="left:212px;top:327.8px;width:86.2px;height:0.6px;background:#d0d0d0"></div>
<svg class="t" style="left:220px;top:338px" width="1" height="1"><text text-anchor="start" font-size="6.15" fill="#222" stroke="#222" stroke-width="0.17">Show Properties</text></svg>
<svg style="left:0;top:0" width="800" height="450" viewBox="0 0 800 450"><path d="M225.4 198.8l-2.4 3.8M227.2 201.4l-4.6 1" fill="none" stroke="#1e1e1e" stroke-width="1.15" stroke-linejoin="round" stroke-linecap="round" /><circle cx="221.6" cy="202.4" r="0.9" fill="none" stroke="#1e1e1e" stroke-width="0.8"/><circle cx="223.4" cy="204.4" r="0.9" fill="none" stroke="#1e1e1e" stroke-width="0.8"/><path d="M220.7 207.5h2.4l1.1 1.1v3.6h-3.5z" fill="#8a8a8a" stroke="#2a2a2a" stroke-width="1.0" stroke-linejoin="round" stroke-linecap="round" /><path d="M223.2 209.5h2.5l1.3 1.3v3h-3.8z" fill="#b4b4b4" stroke="#2a2a2a" stroke-width="1.0" stroke-linejoin="round" stroke-linecap="round" /><path d="M224.3 211.89999999999998h1.6M224.3 212.89999999999998h1.6" fill="none" stroke="#2a2a2a" stroke-width="0.45" stroke-linejoin="round" stroke-linecap="round" /><path d="M220.7 225.5h2.4l1.1 1.1v3.6h-3.5z" fill="#8a8a8a" stroke="#2a2a2a" stroke-width="1.0" stroke-linejoin="round" stroke-linecap="round" /><path d="M223.2 227.5h2.5l1.3 1.3v3h-3.8z" fill="#b4b4b4" stroke="#2a2a2a" stroke-width="1.0" stroke-linejoin="round" stroke-linecap="round" /><path d="M224.3 229.89999999999998h1.6M224.3 230.89999999999998h1.6" fill="none" stroke="#2a2a2a" stroke-width="0.45" stroke-linejoin="round" stroke-linecap="round" /><rect x="220.6" y="217.2" width="4.6" height="5.6" rx="0.4" fill="#555" stroke="#444" stroke-width="0.5" /><rect x="221.8" y="216.4" width="2.2" height="1.3" rx="0.3" fill="#888" stroke="#444" stroke-width="0.4" /><path d="M223.2 219h2.4l1.1 1.1v3h-3.5z" fill="#e0e0e0" stroke="#444" stroke-width="0.6" stroke-linejoin="round" stroke-linecap="round" /><path d="M221.2 242.2h4.6l-0.4 4.8h-3.8z" fill="#555" stroke="#333" stroke-width="0.6" stroke-linejoin="round" stroke-linecap="round" /><path d="M220.6 241.6h5.8M222.4 240.9h2.2" fill="none" stroke="#333" stroke-width="0.9" stroke-linejoin="round" stroke-linecap="round" /><path d="M220.9 256.8v-2.1h2.2M225.4 254.7h2.2v2.1M227.6 258.5v2.1h-2.2M223.1 260.6h-2.2v-2.1" fill="none" stroke="#1a1a1a" stroke-width="1.35" stroke-linejoin="round" stroke-linecap="round" /><circle cx="222.2" cy="265.2" r="1.08" fill="#1a1a1a" stroke="none" stroke-width="0"/><path d="M220.04 268.94c0 -1.87 0.86 -2.45 2.16 -2.45s2.16 0.58 2.16 2.45z" fill="#1a1a1a" stroke="none" stroke-width="0" stroke-linejoin="round" stroke-linecap="round" /><circle cx="226.4" cy="265.2" r="1.08" fill="#1a1a1a" stroke="none" stroke-width="0"/><path d="M224.24 268.94c0 -1.87 0.86 -2.45 2.16 -2.45s2.16 0.58 2.16 2.45z" fill="#1a1a1a" stroke="none" stroke-width="0" stroke-linejoin="round" stroke-linecap="round" /><circle cx="224.3" cy="266.3" r="1.35" fill="#1a1a1a" stroke="none" stroke-width="0"/><path d="M221.60 270.98c0 -2.34 1.08 -3.06 2.70 -3.06s2.70 0.72 2.70 3.06z" fill="#1a1a1a" stroke="none" stroke-width="0" stroke-linejoin="round" stroke-linecap="round" /><circle cx="224.3" cy="274.5" r="1.9" fill="#111" stroke="none" stroke-width="0"/><path d="M220.9 279.7c0-2.3 1.1-3.3 3.4-3.3s3.4 1 3.4 3.3z" fill="#111" stroke="none" stroke-width="0" stroke-linejoin="round" stroke-linecap="round" /><rect x="221.3" y="284.2" width="6" height="4.5" rx="0.5" fill="#111" stroke="none" stroke-width="0" /><path d="M222.7 284.5v-1.5a1.6 1.6 0 0 1 3.2 0v1.5" fill="none" stroke="#111" stroke-width="1.0" stroke-linejoin="round" stroke-linecap="round" /><rect x="221" y="318.2" width="6.6" height="4.6" rx="0.4" fill="#eee" stroke="#2a2a2a" stroke-width="1" /><path d="M224.3 323v1M222.4 324.4h3.8" fill="none" stroke="#2a2a2a" stroke-width="1" stroke-linejoin="round" stroke-linecap="round" /><path d="M233.4 266.6l0.1 5.8 1.4-1.3 1 2.2 1-0.5-1-2.1 1.9-0.2z" fill="#111" stroke="#f0f0f0" stroke-width="0.5" stroke-linejoin="round" stroke-linecap="round" /></svg>
</div></div>
</body></html>
